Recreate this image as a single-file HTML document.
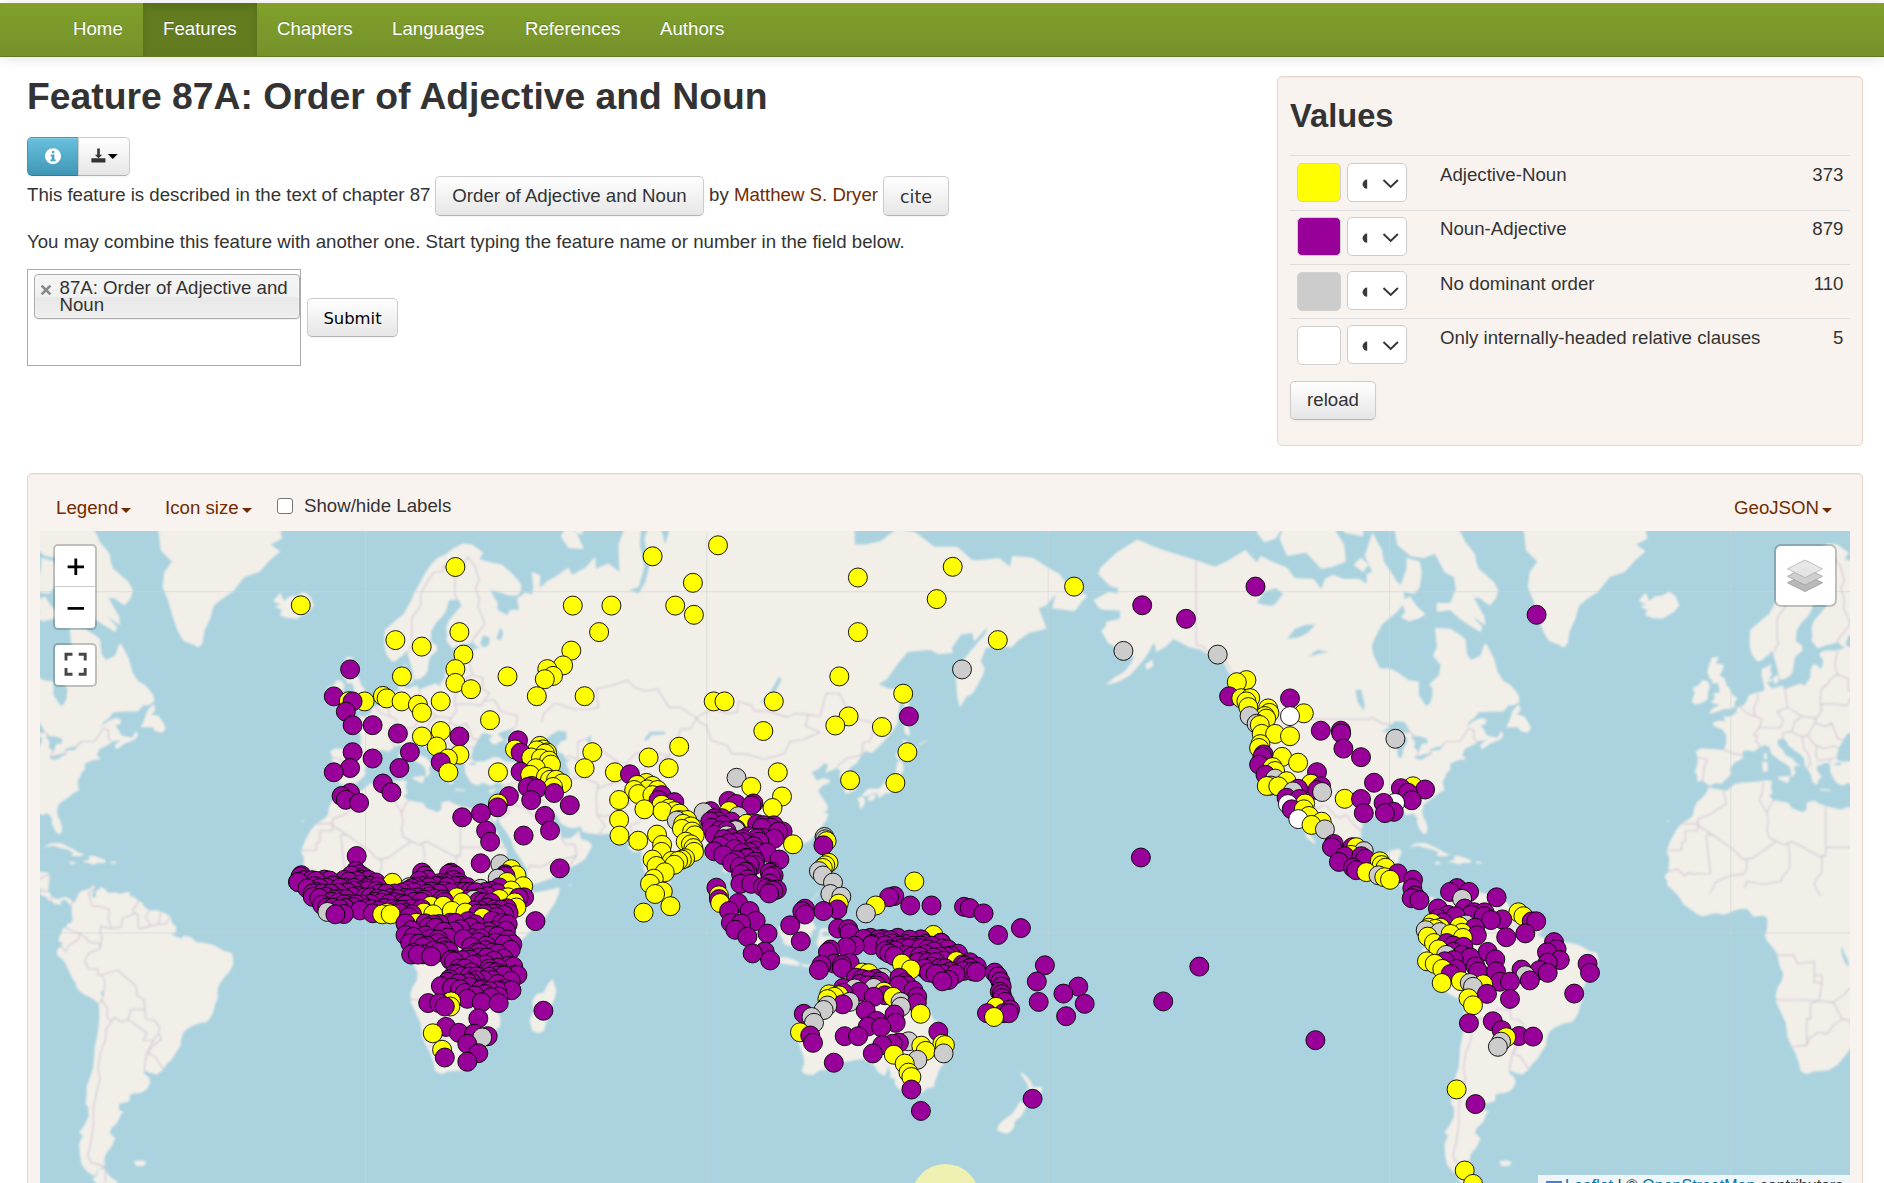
<!DOCTYPE html>
<html lang="en">
<head>
<meta charset="utf-8">
<title>WALS Online - Feature 87A: Order of Adjective and Noun</title>
<style>
html,body{margin:0;padding:0;}
body{width:1884px;height:1183px;overflow:hidden;background:#fff;position:relative;
 font-family:"Liberation Sans",Arial,Helvetica,sans-serif;font-size:18.67px;line-height:26.67px;color:#333;}
a{color:#6f2c00;text-decoration:none;}
#nav{position:absolute;left:0;top:3px;width:1884px;height:54px;
 background:linear-gradient(to bottom,#82a02a,#74922a);border-bottom:1px solid #5f7a1e;box-sizing:border-box;
 box-shadow:0 1px 13px rgba(0,0,0,.12);}
#nav a{position:absolute;top:0;height:53px;line-height:52px;color:#fff;font-size:18.67px;padding:0 20px;text-shadow:0 -1px 0 rgba(0,0,0,.2);}
#nav a.active{background:#637c20;box-shadow:inset 0 4px 10px rgba(0,0,0,.13);}
h2{position:absolute;margin:0;left:27px;top:71px;font-size:37.3px;line-height:50px;font-weight:bold;color:#333;white-space:nowrap;}
.btn{position:absolute;box-sizing:border-box;border:1px solid #ccc;border-bottom-color:#b3b3b3;border-radius:5px;
 background:linear-gradient(to bottom,#ffffff,#e6e6e6);color:#333;font-size:18.67px;text-align:center;
 box-shadow:inset 0 1px 0 rgba(255,255,255,.2),0 1px 3px rgba(0,0,0,.05);white-space:nowrap;}
.abs{position:absolute;white-space:nowrap;}
.well{position:absolute;box-sizing:border-box;background:#f9f3f0;border:1px solid #ecd2c8;border-radius:5px;
 box-shadow:inset 0 1px 1px rgba(0,0,0,.05);}
.caret{display:inline-block;width:0;height:0;vertical-align:middle;margin-left:3px;margin-top:3px;border-top:5.3px solid #6f2c00;border-left:5.3px solid transparent;border-right:5.3px solid transparent;}
</style>
</head>
<body>
<div id="nav">
 <a style="left:53px">Home</a>
 <a class="active" style="left:143px">Features</a>
 <a style="left:257px">Chapters</a>
 <a style="left:372px">Languages</a>
 <a style="left:505px">References</a>
 <a style="left:640px">Authors</a>
</div>
<h2>Feature 87A: Order of Adjective and Noun</h2>

<!-- toolbar buttons -->
<div class="btn" style="left:27px;top:137px;width:52px;height:39px;border-radius:5px 0 0 5px;background:linear-gradient(to bottom,#68c0de,#3f97b5);border-color:#3f97b5 #3f97b5 #2a7d99;">
 <svg width="52" height="39" viewBox="0 0 52 39" style="position:absolute;left:-1px;top:-1px"><circle cx="26" cy="19.2" r="8" fill="#fff"/><path d="M24.2 17.6h3.2v5h1.2v1.6h-5.2v-1.6h1.3v-3.4h-1.3z M24.9 14h2.4v2.2h-2.4z" fill="#4aa3c3"/></svg>
</div>
<div class="btn" style="left:78px;top:137px;width:52px;height:39px;border-radius:0 5px 5px 0;">
 <svg width="52" height="39" viewBox="0 0 52 39" style="position:absolute;left:-1px;top:-1px"><path d="M19.2 11.5h2.6v6.2h2.4l-3.7 3.6-3.7-3.6h2.4z M13.4 21.2h14v4.4h-14z" fill="#333"/><path d="M29.9 17h9.8l-4.9 5z" fill="#000"/></svg>
</div>

<div class="abs" style="left:27px;top:182px;">This feature is described in the text of chapter 87</div>
<div class="btn" style="left:435px;top:176px;width:269px;height:40px;line-height:38px;">Order of Adjective and Noun</div>
<div class="abs" style="left:709px;top:182px;">by <a>Matthew S. Dryer</a></div>
<div class="btn" style="left:883px;top:176px;width:66px;height:40px;line-height:40px;font-family:'DejaVu Sans',sans-serif;font-size:17.5px;">cite</div>
<div class="abs" style="left:27px;top:229px;">You may combine this feature with another one. Start typing the feature name or number in the field below.</div>

<!-- multiselect -->
<div style="position:absolute;left:27px;top:269px;width:274px;height:97px;box-sizing:border-box;border:1px solid #aaa;background:#fff;"></div>
<div style="position:absolute;left:34px;top:274px;width:266px;height:45px;box-sizing:border-box;border:1px solid #aaa;border-radius:4px;background:linear-gradient(to bottom,#f4f4f4 20%,#f0f0f0 50%,#e8e8e8 52%,#eeeeee 100%);box-shadow:0 0 2px #fff inset,0 1px 0 rgba(0,0,0,.05);"></div>
<svg width="12" height="12" viewBox="0 0 12 12" style="position:absolute;left:39.7px;top:283.6px"><path d="M1.6 1.6l8.8 8.8M10.4 1.6l-8.8 8.8" stroke="#8a8a8a" stroke-width="2.7" fill="none"/></svg>
<div class="abs" style="left:59.5px;top:279px;line-height:17px;white-space:normal;width:240px;">87A: Order of Adjective and Noun</div>
<div class="btn" style="left:307px;top:298px;width:91px;height:39px;line-height:39px;font-family:'DejaVu Sans',sans-serif;font-size:16.4px;color:#000;">Submit</div>

<!-- values panel -->
<div class="well" style="left:1277px;top:76px;width:586px;height:370px;"></div>
<div class="abs" style="left:1290px;top:95.7px;font-size:32.67px;line-height:40px;font-weight:bold;">Values</div>
<div style="position:absolute;left:1290px;top:155.2px;width:560px;height:1.3px;background:#ddd;"></div>
<div style="position:absolute;left:1297px;top:163.0px;width:44px;height:39px;box-sizing:border-box;border:1px solid #d0d0d0;border-radius:5px;background:#ffff00;"></div>
<div style="position:absolute;left:1347px;top:162.5px;width:60px;height:39px;box-sizing:border-box;border:1px solid #ccc;border-radius:5px;background:#fff;"><svg width="58" height="37" viewBox="0 0 58 37" style="position:absolute;left:0;top:0"><path d="M19.2 15.6a4.6 4.6 0 0 0 0 9.2z" fill="#3a3a3a"/><path d="M35.5 16l7.2 7 7.2-7" fill="none" stroke="#333" stroke-width="1.9"/></svg></div>
<div class="abs" style="left:1440px;top:161.9px;">Adjective-Noun</div>
<div class="abs" style="left:1700px;width:143.5px;text-align:right;top:161.9px;">373</div>
<div style="position:absolute;left:1290px;top:209.5px;width:560px;height:1.3px;background:#ddd;"></div>
<div style="position:absolute;left:1297px;top:217.3px;width:44px;height:39px;box-sizing:border-box;border:1px solid #d0d0d0;border-radius:5px;background:#990099;"></div>
<div style="position:absolute;left:1347px;top:216.8px;width:60px;height:39px;box-sizing:border-box;border:1px solid #ccc;border-radius:5px;background:#fff;"><svg width="58" height="37" viewBox="0 0 58 37" style="position:absolute;left:0;top:0"><path d="M19.2 15.6a4.6 4.6 0 0 0 0 9.2z" fill="#3a3a3a"/><path d="M35.5 16l7.2 7 7.2-7" fill="none" stroke="#333" stroke-width="1.9"/></svg></div>
<div class="abs" style="left:1440px;top:216.2px;">Noun-Adjective</div>
<div class="abs" style="left:1700px;width:143.5px;text-align:right;top:216.2px;">879</div>
<div style="position:absolute;left:1290px;top:263.8px;width:560px;height:1.3px;background:#ddd;"></div>
<div style="position:absolute;left:1297px;top:271.6px;width:44px;height:39px;box-sizing:border-box;border:1px solid #d0d0d0;border-radius:5px;background:#cccccc;"></div>
<div style="position:absolute;left:1347px;top:271.1px;width:60px;height:39px;box-sizing:border-box;border:1px solid #ccc;border-radius:5px;background:#fff;"><svg width="58" height="37" viewBox="0 0 58 37" style="position:absolute;left:0;top:0"><path d="M19.2 15.6a4.6 4.6 0 0 0 0 9.2z" fill="#3a3a3a"/><path d="M35.5 16l7.2 7 7.2-7" fill="none" stroke="#333" stroke-width="1.9"/></svg></div>
<div class="abs" style="left:1440px;top:270.5px;">No dominant order</div>
<div class="abs" style="left:1700px;width:143.5px;text-align:right;top:270.5px;">110</div>
<div style="position:absolute;left:1290px;top:318.1px;width:560px;height:1.3px;background:#ddd;"></div>
<div style="position:absolute;left:1297px;top:325.9px;width:44px;height:39px;box-sizing:border-box;border:1px solid #d0d0d0;border-radius:5px;background:#ffffff;"></div>
<div style="position:absolute;left:1347px;top:325.4px;width:60px;height:39px;box-sizing:border-box;border:1px solid #ccc;border-radius:5px;background:#fff;"><svg width="58" height="37" viewBox="0 0 58 37" style="position:absolute;left:0;top:0"><path d="M19.2 15.6a4.6 4.6 0 0 0 0 9.2z" fill="#3a3a3a"/><path d="M35.5 16l7.2 7 7.2-7" fill="none" stroke="#333" stroke-width="1.9"/></svg></div>
<div class="abs" style="left:1440px;top:324.8px;">Only internally-headed relative clauses</div>
<div class="abs" style="left:1700px;width:143.5px;text-align:right;top:324.8px;">5</div>

<div class="btn" style="left:1290px;top:381px;width:86px;height:39px;line-height:35px;">reload</div>

<!-- map panel -->
<div class="well" style="left:27px;top:473px;width:1836px;height:760px;"></div>
<div class="abs" style="left:56px;top:494.5px;color:#6f2c00;">Legend<span class="caret"></span></div>
<div class="abs" style="left:165px;top:494.5px;color:#6f2c00;">Icon size<span class="caret"></span></div>
<div style="position:absolute;left:277px;top:498px;width:16px;height:16px;box-sizing:border-box;border:1.5px solid #767676;border-radius:3px;background:#fff;"></div>
<div class="abs" style="left:304px;top:493px;">Show/hide Labels</div>
<div class="abs" style="left:1734px;top:494.5px;color:#6f2c00;">GeoJSON<span class="caret"></span></div>
<!--MAP-->
<svg id="mapsvg" width="1810" height="652" viewBox="40 531 1810 652" style="position:absolute;left:40px;top:531px;">
<rect x="40" y="531" width="1810" height="652" fill="#aad3df"/>
<defs><filter id="soft" x="30" y="521" width="1830" height="672" filterUnits="userSpaceOnUse"><feGaussianBlur stdDeviation="0.9"/></filter></defs>
<g filter="url(#soft)"><rect x="30" y="521" width="1830" height="672" fill="#aad3df"/><path d="M343.1 787.4L354.5 789.7L361.7 790.7L369.3 784.1L376.9 782.7L392.0 781.8L402.7 780.3L407.2 781.8L405.3 786.5L407.2 793.4L403.4 795.7L407.2 799.4L412.9 801.2L423.1 803.0L426.2 807.9L437.6 812.3L441.4 809.2L441.4 802.5L448.9 800.7L453.5 803.4L460.3 806.1L475.5 809.7L483.1 807.0L488.0 808.3L495.2 807.9L497.9 815.8L495.6 823.2L492.9 820.2L489.1 814.1L488.8 815.8L492.6 823.2L496.3 830.8L500.1 839.2L505.4 847.4L507.0 852.3L506.6 859.6L511.5 863.6L515.3 873.5L521.0 877.4L526.7 883.3L529.7 885.2L529.3 889.1L532.4 893.0L540.0 891.8L547.5 890.2L559.7 887.5L558.9 893.0L555.1 902.6L547.5 914.0L540.0 923.5L532.4 929.2L524.8 936.8L521.0 940.6L517.2 944.4L515.3 952.0L513.4 957.7L515.3 963.4L517.2 973.0L519.9 982.7L519.1 990.6L513.4 998.4L505.8 1002.4L498.2 1010.4L500.1 1018.6L500.1 1026.8L490.7 1033.1L489.9 1039.4L483.1 1051.5L471.7 1065.3L463.0 1070.3L448.9 1071.2L441.4 1073.9L435.3 1071.2L433.8 1063.5L430.0 1052.4L426.2 1045.8L422.4 1037.3L420.5 1022.7L416.7 1014.5L411.0 1002.4L410.3 994.5L412.9 986.6L416.7 980.8L417.8 973.0L414.8 967.3L412.1 955.8L411.0 952.0L401.5 940.6L399.6 935.7L401.5 929.2L402.3 921.6L401.5 917.8L397.7 915.5L392.0 916.3L388.3 916.7L384.5 912.1L382.2 909.1L375.0 909.1L369.3 910.6L363.6 912.9L357.9 914.8L354.1 913.6L348.4 913.3L337.1 916.3L331.4 914.0L323.8 907.9L318.1 904.5L315.1 898.7L310.5 893.0L306.7 889.1L302.2 885.6L301.8 881.3L299.1 876.6L302.9 871.5L303.7 863.6L304.1 857.6L301.0 851.5L304.8 841.3L310.5 830.8L316.2 823.6L323.8 818.9L327.6 815.8L328.7 809.2L331.4 802.5L337.1 797.6L340.8 793.4ZM1708.5 787.4L1719.8 789.7L1727.0 790.7L1734.6 784.1L1742.2 782.7L1757.4 781.8L1768.0 780.3L1772.6 781.8L1770.7 786.5L1772.6 793.4L1768.8 795.7L1772.6 799.4L1778.2 801.2L1788.5 803.0L1791.5 807.9L1802.9 812.3L1806.7 809.2L1806.7 802.5L1814.3 800.7L1818.8 803.4L1825.6 806.1L1840.8 809.7L1848.4 807.0L1853.3 808.3L1860.5 807.9L1863.2 815.8L1860.9 823.2L1858.3 820.2L1854.5 814.1L1854.1 815.8L1857.9 823.2L1861.7 830.8L1865.5 839.2L1870.8 847.4L1872.3 852.3L1871.9 859.6L1876.8 863.6L1880.6 873.5L1886.3 877.4L1892.0 883.3L1895.1 885.2L1894.7 889.1L1897.7 893.0L1905.3 891.8L1912.9 890.2L1925.0 887.5L1924.3 893.0L1920.5 902.6L1912.9 914.0L1905.3 923.5L1897.7 929.2L1890.1 936.8L1886.3 940.6L1882.5 944.4L1880.6 952.0L1878.7 957.7L1880.6 963.4L1882.5 973.0L1885.2 982.7L1884.4 990.6L1878.7 998.4L1871.2 1002.4L1863.6 1010.4L1865.5 1018.6L1865.5 1026.8L1856.0 1033.1L1855.2 1039.4L1848.4 1051.5L1837.0 1065.3L1828.3 1070.3L1814.3 1071.2L1806.7 1073.9L1800.6 1071.2L1799.1 1063.5L1795.3 1052.4L1791.5 1045.8L1787.7 1037.3L1785.8 1022.7L1782.0 1014.5L1776.3 1002.4L1775.6 994.5L1778.2 986.6L1782.0 980.8L1783.2 973.0L1780.1 967.3L1777.5 955.8L1776.3 952.0L1766.9 940.6L1765.0 935.7L1766.9 929.2L1767.6 921.6L1766.9 917.8L1763.1 915.5L1757.4 916.3L1753.6 916.7L1749.8 912.1L1747.5 909.1L1740.3 909.1L1734.6 910.6L1728.9 912.9L1723.2 914.8L1719.5 913.6L1713.8 913.3L1702.4 916.3L1696.7 914.0L1689.1 907.9L1683.4 904.5L1680.4 898.7L1675.8 893.0L1672.0 889.1L1667.5 885.6L1667.1 881.3L1664.5 876.6L1668.3 871.5L1669.0 863.6L1669.4 857.6L1666.4 851.5L1670.2 841.3L1675.8 830.8L1681.5 823.6L1689.1 818.9L1692.9 815.8L1694.0 809.2L1696.7 802.5L1702.4 797.6L1706.2 793.4ZM552.5 978.8L556.3 990.6L554.4 998.4L549.4 1010.4L545.6 1024.7L543.8 1031.0L538.1 1033.1L532.4 1031.0L529.7 1020.6L533.5 1010.4L532.4 1000.4L536.2 994.5L543.8 992.5L547.5 984.7ZM488.0 808.3L495.2 807.9L497.9 801.2L500.1 796.2L501.7 788.8L502.8 783.2L496.3 782.7L490.7 786.0L483.1 782.7L477.4 785.5L471.7 783.2L469.0 779.4L466.0 774.6L464.9 769.7L464.9 766.7L464.1 763.2L458.4 762.7L454.6 765.7L452.0 764.7L451.2 769.7L453.5 773.1L456.5 777.0L452.7 779.9L452.7 784.1L450.1 783.7L447.8 782.7L446.3 778.4L445.9 775.1L443.2 770.7L439.5 765.7L439.1 759.7L435.7 754.6L430.0 751.0L423.5 745.7L420.5 740.4L417.5 738.2L412.1 739.9L412.5 745.7L416.7 748.9L420.5 755.6L426.2 757.7L430.0 762.2L435.7 766.2L430.0 765.2L428.5 769.2L430.4 772.1L428.1 775.5L425.0 777.5L426.2 773.6L424.7 767.2L420.5 763.7L414.8 760.7L411.8 758.2L407.2 755.1L405.3 752.0L404.2 747.3L399.3 744.7L393.9 747.8L388.3 751.5L382.6 749.9L377.6 751.0L377.3 755.1L377.6 757.7L373.8 760.2L368.5 763.2L364.4 769.7L365.9 773.6L362.8 777.5L358.7 780.8L357.2 783.2L348.8 783.2L345.0 786.0L341.6 784.1L337.4 780.8L331.7 781.8L332.1 775.1L329.5 773.1L331.7 766.2L332.5 761.2L331.7 754.6L330.2 751.5L335.2 748.4L343.9 748.9L351.1 749.4L358.7 749.9L360.9 743.1L360.9 735.0L357.2 729.4L348.8 726.1L347.3 722.7L354.1 720.4L359.4 721.5L358.7 715.1L361.3 716.9L365.9 716.3L371.2 712.8L371.6 708.0L378.8 705.0L381.4 700.7L383.7 695.1L392.0 692.6L397.7 691.3L399.3 688.7L398.1 682.2L396.2 675.5L396.6 668.6L401.5 667.2L405.7 663.7L404.9 672.1L406.8 673.4L403.4 678.9L401.9 682.2L403.4 685.5L407.2 688.7L411.0 687.4L416.7 685.5L419.4 689.4L426.2 686.8L435.7 683.5L439.5 686.1L441.4 682.8L445.1 677.5L445.1 670.0L447.8 664.4L451.2 664.4L453.9 667.9L456.5 668.6L458.0 659.4L454.6 656.5L454.6 652.8L459.6 650.6L471.7 650.6L480.0 647.6L475.5 645.3L473.6 642.2L460.3 645.3L452.4 648.3L446.3 640.7L447.0 635.2L446.3 627.1L448.9 620.4L458.4 609.2L461.8 605.6L458.4 599.3L448.9 600.2L446.3 610.1L442.5 616.2L435.7 623.0L431.1 631.2L430.7 641.5L436.4 645.3L437.2 650.6L430.0 656.5L428.5 663.0L427.7 670.7L425.4 674.8L419.7 678.9L414.8 679.5L413.7 675.5L412.1 669.3L410.6 663.7L408.0 654.3L405.7 650.6L404.2 654.3L401.5 655.8L395.8 660.8L392.0 661.6L386.7 655.0L384.5 646.8L384.5 635.2L385.2 629.6L390.2 625.5L397.7 618.7L403.4 614.5L408.0 606.5L412.1 598.4L414.8 591.8L420.5 582.1L424.3 575.0L428.1 568.8L431.9 563.5L437.6 558.1L445.1 554.8L453.9 548.0L463.0 543.4L471.7 544.5L483.1 552.5L479.3 559.2L490.7 562.5L502.0 564.6L513.4 575.0L521.0 584.1L521.0 590.8L517.2 595.6L509.6 595.6L498.2 591.8L490.7 589.9L488.4 586.0L492.6 594.6L497.5 602.9L497.5 610.1L507.7 615.3L509.6 610.1L519.1 610.1L517.2 598.4L524.8 592.7L532.4 594.6L533.5 587.0L531.6 572.0L540.0 575.0L540.0 588.0L547.5 581.1L555.1 577.1L568.4 567.8L572.2 575.0L585.5 567.8L595.0 557.0L596.1 568.8L608.2 563.5L619.6 572.0L618.8 555.9L618.5 544.5L625.3 526.4L631.0 516.0L641.6 522.5L639.7 544.5L644.3 566.7L638.6 587.0L629.1 589.9L638.6 593.7L645.4 582.1L649.2 566.7L644.6 538.6L649.9 522.5L661.3 530.1L665.1 544.5L670.8 526.4L680.3 513.4L706.8 485.0L759.9 448.9L794.1 477.3L771.3 517.4L796.0 512.0L820.6 520.0L847.2 512.0L854.7 532.6L854.7 544.5L866.1 544.5L881.3 541.0L896.5 528.9L915.4 532.6L934.4 546.8L957.1 546.8L972.3 560.3L979.9 560.3L998.9 558.1L1010.2 566.7L1012.1 555.9L1033.0 558.1L1048.2 567.8L1059.5 574.0L1069.0 587.0L1087.2 595.6L1082.3 601.1L1074.7 611.0L1052.0 608.3L1055.8 593.7L1046.3 605.6L1038.7 608.3L1044.4 623.0L1046.3 628.7L1029.2 632.8L1017.8 640.7L1011.4 647.6L997.0 645.3L985.6 648.3L980.7 661.6L984.8 668.6L982.9 674.8L979.1 682.2L972.3 693.8L966.6 696.4L959.8 707.4L957.1 695.1L956.0 675.5L960.9 663.0L971.2 650.6L985.6 633.6L987.5 627.1L974.2 641.5L972.3 632.8L960.9 634.4L951.5 648.3L953.4 652.8L938.2 654.3L930.6 649.8L907.8 652.1L898.4 663.0L887.0 678.9L878.6 684.2L888.9 688.7L896.5 688.7L901.4 693.8L900.3 702.6L898.4 713.4L897.6 723.2L890.8 733.3L881.3 744.1L871.8 753.1L865.7 751.0L861.2 755.6L857.4 762.2L849.4 768.2L849.1 770.7L852.5 774.6L856.3 781.8L856.3 788.8L852.8 791.6L845.3 793.9L844.5 788.8L846.0 782.7L844.1 778.4L839.6 777.9L840.7 770.7L836.9 767.7L829.3 771.2L825.2 773.1L828.2 764.7L824.4 763.2L818.0 769.2L811.9 772.1L814.2 777.0L816.8 780.8L823.3 777.9L830.1 779.9L829.3 782.7L821.7 786.0L818.0 791.1L821.7 796.7L827.4 805.2L827.8 809.7L823.6 812.3L828.2 814.1L826.3 820.2L821.7 826.6L818.7 832.9L813.8 837.1L808.5 841.7L799.0 845.4L796.0 846.6L789.5 849.1L784.6 850.3L783.8 853.9L781.9 849.5L776.2 849.1L770.5 852.3L766.8 858.8L769.4 864.4L774.3 870.7L778.9 877.4L780.0 885.2L778.9 889.5L772.1 893.3L770.2 896.8L764.5 899.9L763.0 895.7L761.8 893.3L756.1 889.9L753.5 886.4L748.6 884.4L748.2 881.7L744.8 881.7L744.4 887.2L741.7 893.0L742.1 898.0L746.3 902.6L746.7 905.6L752.3 909.4L756.9 914.8L758.0 922.4L760.7 927.7L758.0 928.1L753.1 924.7L749.7 922.0L747.0 917.1L745.9 911.0L743.6 907.1L739.8 902.6L738.3 898.7L739.4 893.0L739.8 887.2L737.9 881.3L736.0 875.4L735.7 869.9L732.6 867.6L727.3 872.3L723.1 871.5L723.9 865.6L720.9 858.4L715.6 852.3L713.7 846.2L708.7 845.0L703.0 848.3L695.5 849.5L694.7 854.3L688.6 857.2L681.4 864.8L677.6 868.7L670.0 872.3L669.3 879.4L670.0 885.2L668.1 891.0L668.1 893.7L665.1 897.6L662.1 899.1L659.4 902.2L655.6 898.7L653.0 889.9L649.2 883.3L647.3 876.2L644.3 870.3L641.6 859.6L641.6 851.5L640.5 848.3L639.3 851.5L634.0 852.3L627.9 847.4L632.1 844.2L625.3 842.1L621.1 837.9L618.1 833.8L608.2 833.8L598.7 834.6L589.3 833.3L582.8 831.7L580.9 826.6L574.1 827.9L568.4 827.4L560.8 823.2L556.3 814.5L550.6 812.3L547.5 814.1L548.3 819.3L553.2 825.3L555.9 828.7L557.8 835.0L559.3 830.8L561.2 833.3L560.4 837.1L564.6 838.4L570.3 838.4L577.1 832.9L579.0 829.6L579.8 835.0L581.7 839.6L588.1 841.3L592.3 845.4L588.5 852.7L584.7 859.6L582.8 860.8L576.0 864.8L563.9 870.7L551.3 878.2L536.9 883.3L530.5 884.4L527.8 877.4L526.7 868.7L521.0 859.6L514.2 849.5L511.5 840.4L507.0 832.9L499.4 822.3L497.9 815.8L495.6 823.2L492.9 820.2L489.1 814.1ZM1853.3 808.3L1860.5 807.9L1863.2 801.2L1865.5 796.2L1867.0 788.8L1868.1 783.2L1861.7 782.7L1856.0 786.0L1848.4 782.7L1842.7 785.5L1837.0 783.2L1834.4 779.4L1831.3 774.6L1830.2 769.7L1830.2 766.7L1829.4 763.2L1823.8 762.7L1820.0 765.7L1817.3 764.7L1816.5 769.7L1818.8 773.1L1821.9 777.0L1818.1 779.9L1818.1 784.1L1815.4 783.7L1813.1 782.7L1811.6 778.4L1811.2 775.1L1808.6 770.7L1804.8 765.7L1804.4 759.7L1801.0 754.6L1795.3 751.0L1788.9 745.7L1785.8 740.4L1782.8 738.2L1777.5 739.9L1777.9 745.7L1782.0 748.9L1785.8 755.6L1791.5 757.7L1795.3 762.2L1801.0 766.2L1795.3 765.2L1793.8 769.2L1795.7 772.1L1793.4 775.5L1790.4 777.5L1791.5 773.6L1790.0 767.2L1785.8 763.7L1780.1 760.7L1777.1 758.2L1772.6 755.1L1770.7 752.0L1769.5 747.3L1764.6 744.7L1759.3 747.8L1753.6 751.5L1747.9 749.9L1743.0 751.0L1742.6 755.1L1743.0 757.7L1739.2 760.2L1733.9 763.2L1729.7 769.7L1731.2 773.6L1728.2 777.5L1724.0 780.8L1722.5 783.2L1714.1 783.2L1710.4 786.0L1706.9 784.1L1702.8 780.8L1697.1 781.8L1697.5 775.1L1694.8 773.1L1697.1 766.2L1697.8 761.2L1697.1 754.6L1695.6 751.5L1700.5 748.4L1709.2 748.9L1716.4 749.4L1724.0 749.9L1726.3 743.1L1726.3 735.0L1722.5 729.4L1714.1 726.1L1712.6 722.7L1719.5 720.4L1724.8 721.5L1724.0 715.1L1726.7 716.9L1731.2 716.3L1736.5 712.8L1736.9 708.0L1744.1 705.0L1746.8 700.7L1749.0 695.1L1757.4 692.6L1763.1 691.3L1764.6 688.7L1763.4 682.2L1761.6 675.5L1761.9 668.6L1766.9 667.2L1771.0 663.7L1770.3 672.1L1772.2 673.4L1768.8 678.9L1767.2 682.2L1768.8 685.5L1772.6 688.7L1776.3 687.4L1782.0 685.5L1784.7 689.4L1791.5 686.8L1801.0 683.5L1804.8 686.1L1806.7 682.8L1810.5 677.5L1810.5 670.0L1813.1 664.4L1816.5 664.4L1819.2 667.9L1821.9 668.6L1823.4 659.4L1820.0 656.5L1820.0 652.8L1824.9 650.6L1837.0 650.6L1845.4 647.6L1840.8 645.3L1838.9 642.2L1825.6 645.3L1817.7 648.3L1811.6 640.7L1812.4 635.2L1811.6 627.1L1814.3 620.4L1823.8 609.2L1827.2 605.6L1823.8 599.3L1814.3 600.2L1811.6 610.1L1807.8 616.2L1801.0 623.0L1796.4 631.2L1796.1 641.5L1801.8 645.3L1802.5 650.6L1795.3 656.5L1793.8 663.0L1793.0 670.7L1790.8 674.8L1785.1 678.9L1780.1 679.5L1779.0 675.5L1777.5 669.3L1776.0 663.7L1773.3 654.3L1771.0 650.6L1769.5 654.3L1766.9 655.8L1761.2 660.8L1757.4 661.6L1752.1 655.0L1749.8 646.8L1749.8 635.2L1750.6 629.6L1755.5 625.5L1763.1 618.7L1768.8 614.5L1773.3 606.5L1777.5 598.4L1780.1 591.8L1785.8 582.1L1789.6 575.0L1793.4 568.8L1797.2 563.5L1802.9 558.1L1810.5 554.8L1819.2 548.0L1828.3 543.4L1837.0 544.5L1848.4 552.5L1844.6 559.2L1856.0 562.5L1867.4 564.6L1878.7 575.0L1886.3 584.1L1886.3 590.8L1882.5 595.6L1875.0 595.6L1863.6 591.8L1856.0 589.9L1853.7 586.0L1857.9 594.6L1862.8 602.9L1862.8 610.1L1873.1 615.3L1875.0 610.1L1884.4 610.1L1882.5 598.4L1890.1 592.7L1897.7 594.6L1898.8 587.0L1896.9 572.0L1905.3 575.0L1905.3 588.0L1912.9 581.1L1920.5 577.1L1933.7 567.8L1937.5 575.0L1950.8 567.8L1960.3 557.0L1961.4 568.8L1973.6 563.5L1984.9 572.0L1984.2 555.9L1983.8 544.5L1990.6 526.4L1996.3 516.0L2006.9 522.5L2005.0 544.5L2009.6 566.7L2003.9 587.0L1994.4 589.9L2003.9 593.7L2010.7 582.1L2014.5 566.7L2010.0 538.6L2015.3 522.5L2026.7 530.1L2030.4 544.5L2036.1 526.4L2045.6 513.4L2072.2 485.0L2125.3 448.9L2159.4 477.3L2136.6 517.4L2161.3 512.0L2185.9 520.0L2212.5 512.0L2220.1 532.6L2220.1 544.5L2231.5 544.5L2246.6 541.0L2261.8 528.9L2280.8 532.6L2299.7 546.8L2322.5 546.8L2337.6 560.3L2345.2 560.3L2364.2 558.1L2375.6 566.7L2377.5 555.9L2398.3 558.1L2413.5 567.8L2424.9 574.0L2434.4 587.0L2452.6 595.6L2447.6 601.1L2440.0 611.0L2417.3 608.3L2421.1 593.7L2411.6 605.6L2404.0 608.3L2409.7 623.0L2411.6 628.7L2394.5 632.8L2383.2 640.7L2376.7 647.6L2362.3 645.3L2350.9 648.3L2346.0 661.6L2350.2 668.6L2348.3 674.8L2344.5 682.2L2337.6 693.8L2332.0 696.4L2325.1 707.4L2322.5 695.1L2321.3 675.5L2326.3 663.0L2336.5 650.6L2350.9 633.6L2352.8 627.1L2339.5 641.5L2337.6 632.8L2326.3 634.4L2316.8 648.3L2318.7 652.8L2303.5 654.3L2295.9 649.8L2273.2 652.1L2263.7 663.0L2252.3 678.9L2244.0 684.2L2254.2 688.7L2261.8 688.7L2266.7 693.8L2265.6 702.6L2263.7 713.4L2262.9 723.2L2256.1 733.3L2246.6 744.1L2237.1 753.1L2231.1 751.0L2226.5 755.6L2222.7 762.2L2214.8 768.2L2214.4 770.7L2217.8 774.6L2221.6 781.8L2221.6 788.8L2218.2 791.6L2210.6 793.9L2209.8 788.8L2211.4 782.7L2209.5 778.4L2204.9 777.9L2206.0 770.7L2202.3 767.7L2194.7 771.2L2190.5 773.1L2193.5 764.7L2189.7 763.2L2183.3 769.2L2177.2 772.1L2179.5 777.0L2182.2 780.8L2188.6 777.9L2195.4 779.9L2194.7 782.7L2187.1 786.0L2183.3 791.1L2187.1 796.7L2192.8 805.2L2193.1 809.7L2189.0 812.3L2193.5 814.1L2191.6 820.2L2187.1 826.6L2184.0 832.9L2179.1 837.1L2173.8 841.7L2164.3 845.4L2161.3 846.6L2154.8 849.1L2149.9 850.3L2149.2 853.9L2147.3 849.5L2141.6 849.1L2135.9 852.3L2132.1 858.8L2134.7 864.4L2139.7 870.7L2144.2 877.4L2145.4 885.2L2144.2 889.5L2137.4 893.3L2135.5 896.8L2129.8 899.9L2128.3 895.7L2127.2 893.3L2121.5 889.9L2118.8 886.4L2113.9 884.4L2113.5 881.7L2110.1 881.7L2109.7 887.2L2107.1 893.0L2107.4 898.0L2111.6 902.6L2112.0 905.6L2117.7 909.4L2122.2 914.8L2123.4 922.4L2126.0 927.7L2123.4 928.1L2118.4 924.7L2115.0 922.0L2112.4 917.1L2111.2 911.0L2109.0 907.1L2105.2 902.6L2103.6 898.7L2104.8 893.0L2105.2 887.2L2103.3 881.3L2101.4 875.4L2101.0 869.9L2098.0 867.6L2092.6 872.3L2088.5 871.5L2089.2 865.6L2086.2 858.4L2080.9 852.3L2079.0 846.2L2074.1 845.0L2068.4 848.3L2060.8 849.5L2060.0 854.3L2054.0 857.2L2046.8 864.8L2043.0 868.7L2035.4 872.3L2034.6 879.4L2035.4 885.2L2033.5 891.0L2033.5 893.7L2030.4 897.6L2027.4 899.1L2024.8 902.2L2021.0 898.7L2018.3 889.9L2014.5 883.3L2012.6 876.2L2009.6 870.3L2006.9 859.6L2006.9 851.5L2005.8 848.3L2004.7 851.5L1999.3 852.3L1993.3 847.4L1997.5 844.2L1990.6 842.1L1986.5 837.9L1983.4 833.8L1973.6 833.8L1964.1 834.6L1954.6 833.3L1948.1 831.7L1946.3 826.6L1939.4 827.9L1933.7 827.4L1926.2 823.2L1921.6 814.5L1915.9 812.3L1912.9 814.1L1913.6 819.3L1918.6 825.3L1921.2 828.7L1923.1 835.0L1924.6 830.8L1926.5 833.3L1925.8 837.1L1929.9 838.4L1935.6 838.4L1942.5 832.9L1944.4 829.6L1945.1 835.0L1947.0 839.6L1953.5 841.3L1957.6 845.4L1953.8 852.7L1950.0 859.6L1948.1 860.8L1941.3 864.8L1929.2 870.7L1916.7 878.2L1902.3 883.3L1895.8 884.4L1893.2 877.4L1892.0 868.7L1886.3 859.6L1879.5 849.5L1876.8 840.4L1872.3 832.9L1864.7 822.3L1863.2 815.8L1860.9 823.2L1858.3 820.2L1854.5 814.1ZM-271.7 600.2L-256.5 591.8L-248.1 593.7L-247.0 588.0L-255.3 586.0L-267.1 574.0L-264.8 567.8L-248.5 552.5L-228.0 539.8L-211.0 546.8L-197.7 551.4L-169.3 560.3L-150.3 566.7L-138.9 561.4L-120.0 550.3L-108.6 562.5L-104.8 555.9L-93.4 561.4L-78.2 567.8L-70.6 578.1L-51.7 579.1L-44.1 588.9L-40.3 579.1L-32.7 575.0L-21.3 579.1L-6.2 579.1L1.4 584.1L1.4 574.0L7.1 572.0L-0.5 555.9L7.1 532.6L16.6 550.3L18.5 561.4L24.2 569.9L31.8 582.1L35.5 585.0L41.2 568.8L41.2 558.1L54.5 561.4L56.4 572.0L54.5 587.0L48.8 593.7L38.2 591.8L39.3 601.1L33.6 610.1L21.5 620.4L16.6 624.6L9.0 639.1L6.3 646.8L8.2 655.8L14.7 668.6L24.2 668.6L31.8 672.1L43.1 680.2L53.4 681.5L53.4 695.1L60.2 705.6L64.0 704.4L66.6 698.2L67.4 688.7L64.0 684.2L73.5 675.5L75.4 665.1L67.8 655.8L71.6 646.8L69.7 627.9L84.8 628.7L92.4 633.6L100.0 639.1L101.5 654.3L105.7 660.1L115.2 655.8L119.0 644.5L120.9 643.8L128.5 658.0L132.3 672.1L137.9 680.9L145.5 685.5L148.2 688.7L153.1 695.1L154.3 701.3L149.3 705.0L142.9 705.6L137.9 711.6L126.6 711.6L113.3 712.2L109.5 717.5L103.8 722.1L100.0 727.8L95.5 731.7L101.9 726.1L107.6 721.5L115.2 718.1L121.3 719.8L119.7 724.4L115.2 724.9L119.0 730.6L120.9 735.0L123.5 736.1L132.3 737.7L136.0 730.6L137.9 736.1L134.2 739.9L124.7 743.6L116.3 749.4L114.8 745.2L120.9 739.9L111.4 741.5L111.4 743.1L103.8 746.8L99.3 748.9L97.4 754.1L96.6 755.6L100.0 757.7L100.0 759.2L94.7 759.7L88.6 761.7L84.8 763.7L84.8 769.7L81.1 773.1L80.7 775.5L77.3 781.8L78.4 787.4L79.2 790.2L74.2 792.5L69.7 796.2L65.1 799.4L62.1 801.6L58.3 804.8L56.8 811.4L58.3 818.0L60.2 820.6L62.1 827.4L61.3 832.9L58.7 834.2L55.3 830.8L51.9 823.6L51.9 818.0L48.1 813.6L45.8 813.6L41.6 814.9L37.4 811.9L31.8 812.3L28.0 812.3L26.4 817.6L22.3 817.1L16.6 815.4L9.0 815.4L5.2 817.1L-2.4 822.3L-3.9 830.8L-5.0 839.2L-5.4 846.2L-3.1 852.7L0.7 858.8L6.0 862.4L9.0 862.8L16.6 861.2L21.5 858.0L22.6 851.5L31.8 849.1L35.5 849.5L36.3 852.3L33.6 857.6L32.5 862.8L31.0 865.6L29.1 871.5L31.8 872.3L39.3 871.9L46.9 872.3L50.0 875.4L48.8 883.3L48.1 891.0L50.7 894.9L53.7 898.0L58.3 899.5L62.5 897.6L65.9 896.8L71.6 899.9L72.0 900.3L70.1 905.6L68.2 902.2L64.0 899.1L60.6 901.8L61.0 905.2L55.6 903.7L51.5 901.8L48.4 900.6L48.1 898.3L43.9 896.0L40.5 894.9L40.1 891.0L35.5 885.2L33.3 882.9L28.0 882.1L22.3 879.8L15.8 877.4L9.8 871.9L6.0 870.7L-0.5 872.7L-8.1 870.3L-13.4 868.4L-20.6 864.4L-27.0 862.4L-33.5 858.0L-35.4 853.9L-33.9 849.5L-36.5 844.2L-38.0 842.5L-44.1 835.0L-49.4 832.1L-49.4 826.6L-54.0 822.7L-60.0 818.0L-63.1 809.2L-69.5 806.1L-69.5 811.4L-65.0 818.0L-62.3 822.3L-57.4 830.0L-53.6 837.1L-49.8 842.5L-51.3 843.7L-59.3 837.1L-60.0 830.8L-66.9 826.2L-70.6 823.2L-67.6 820.2L-73.7 812.8L-77.1 805.7L-78.6 802.5L-83.5 796.7L-91.5 793.4L-96.8 783.7L-99.1 777.9L-104.0 769.7L-105.9 765.2L-105.5 757.2L-106.7 752.0L-104.8 744.1L-104.8 735.0L-107.4 722.7L-101.0 723.8L-99.1 727.8L-100.2 719.2L-101.7 717.5L-107.8 713.4L-116.2 707.4L-120.0 698.2L-128.7 686.8L-131.3 678.9L-137.0 672.1L-142.7 660.1L-150.3 659.4L-156.0 655.8L-164.3 649.8L-176.8 646.8L-188.2 640.7L-192.0 639.1L-199.6 646.8L-209.1 652.1L-211.0 643.0L-203.4 637.6L-212.9 644.5L-216.7 652.1L-220.5 658.0L-228.0 667.2L-235.6 675.5L-245.1 680.9L-252.7 683.5L-259.5 684.8L-250.8 677.5L-241.3 672.1L-233.7 663.0L-231.1 656.5L-235.6 655.8L-248.1 656.5L-248.9 647.6L-257.2 643.0L-261.4 635.2L-264.1 631.2L-259.5 626.3L-259.1 622.1L-245.1 618.7L-245.1 611.0L-250.8 610.1L-260.3 610.1L-266.0 608.3ZM1093.7 600.2L1108.8 591.8L1117.2 593.7L1118.3 588.0L1110.0 586.0L1098.2 574.0L1100.5 567.8L1116.8 552.5L1137.3 539.8L1154.4 546.8L1167.6 551.4L1196.1 560.3L1215.0 566.7L1226.4 561.4L1245.4 550.3L1256.8 562.5L1260.6 555.9L1271.9 561.4L1287.1 567.8L1294.7 578.1L1313.6 579.1L1321.2 588.9L1325.0 579.1L1332.6 575.0L1344.0 579.1L1359.2 579.1L1366.7 584.1L1366.7 574.0L1372.4 572.0L1364.8 555.9L1372.4 532.6L1381.9 550.3L1383.8 561.4L1389.5 569.9L1397.1 582.1L1400.9 585.0L1406.6 568.8L1406.6 558.1L1419.8 561.4L1421.7 572.0L1419.8 587.0L1414.2 593.7L1403.5 591.8L1404.7 601.1L1399.0 610.1L1386.8 620.4L1381.9 624.6L1374.3 639.1L1371.7 646.8L1373.6 655.8L1380.0 668.6L1389.5 668.6L1397.1 672.1L1408.5 680.2L1418.7 681.5L1418.7 695.1L1425.5 705.6L1429.3 704.4L1432.0 698.2L1432.7 688.7L1429.3 684.2L1438.8 675.5L1440.7 665.1L1433.1 655.8L1436.9 646.8L1435.0 627.9L1450.2 628.7L1457.8 633.6L1465.4 639.1L1466.9 654.3L1471.0 660.1L1480.5 655.8L1484.3 644.5L1486.2 643.8L1493.8 658.0L1497.6 672.1L1503.3 680.9L1510.9 685.5L1513.5 688.7L1518.4 695.1L1519.6 701.3L1514.7 705.0L1508.2 705.6L1503.3 711.6L1491.9 711.6L1478.6 712.2L1474.8 717.5L1469.1 722.1L1465.4 727.8L1460.8 731.7L1467.2 726.1L1472.9 721.5L1480.5 718.1L1486.6 719.8L1485.1 724.4L1480.5 724.9L1484.3 730.6L1486.2 735.0L1488.9 736.1L1497.6 737.7L1501.4 730.6L1503.3 736.1L1499.5 739.9L1490.0 743.6L1481.7 749.4L1480.1 745.2L1486.2 739.9L1476.7 741.5L1476.7 743.1L1469.1 746.8L1464.6 748.9L1462.7 754.1L1461.9 755.6L1465.4 757.7L1465.4 759.2L1460.0 759.7L1454.0 761.7L1450.2 763.7L1450.2 769.7L1446.4 773.1L1446.0 775.5L1442.6 781.8L1443.7 787.4L1444.5 790.2L1439.6 792.5L1435.0 796.2L1430.5 799.4L1427.4 801.6L1423.6 804.8L1422.1 811.4L1423.6 818.0L1425.5 820.6L1427.4 827.4L1426.7 832.9L1424.0 834.2L1420.6 830.8L1417.2 823.6L1417.2 818.0L1413.4 813.6L1411.1 813.6L1406.9 814.9L1402.8 811.9L1397.1 812.3L1393.3 812.3L1391.8 817.6L1387.6 817.1L1381.9 815.4L1374.3 815.4L1370.5 817.1L1363.0 822.3L1361.4 830.8L1360.3 839.2L1359.9 846.2L1362.2 852.7L1366.0 858.8L1371.3 862.4L1374.3 862.8L1381.9 861.2L1386.8 858.0L1388.0 851.5L1397.1 849.1L1400.9 849.5L1401.6 852.3L1399.0 857.6L1397.8 862.8L1396.3 865.6L1394.4 871.5L1397.1 872.3L1404.7 871.9L1412.3 872.3L1415.3 875.4L1414.2 883.3L1413.4 891.0L1416.0 894.9L1419.1 898.0L1423.6 899.5L1427.8 897.6L1431.2 896.8L1436.9 899.9L1437.3 900.3L1435.4 905.6L1433.5 902.2L1429.3 899.1L1425.9 901.8L1426.3 905.2L1421.0 903.7L1416.8 901.8L1413.8 900.6L1413.4 898.3L1409.2 896.0L1405.8 894.9L1405.4 891.0L1400.9 885.2L1398.6 882.9L1393.3 882.1L1387.6 879.8L1381.2 877.4L1375.1 871.9L1371.3 870.7L1364.8 872.7L1357.3 870.3L1352.0 868.4L1344.7 864.4L1338.3 862.4L1331.9 858.0L1330.0 853.9L1331.5 849.5L1328.8 844.2L1327.3 842.5L1321.2 835.0L1315.9 832.1L1315.9 826.6L1311.4 822.7L1305.3 818.0L1302.3 809.2L1295.8 806.1L1295.8 811.4L1300.4 818.0L1303.0 822.3L1308.0 830.0L1311.8 837.1L1315.5 842.5L1314.0 843.7L1306.1 837.1L1305.3 830.8L1298.5 826.2L1294.7 823.2L1297.7 820.2L1291.7 812.8L1288.2 805.7L1286.7 802.5L1281.8 796.7L1273.8 793.4L1268.5 783.7L1266.2 777.9L1261.3 769.7L1259.4 765.2L1259.8 757.2L1258.7 752.0L1260.6 744.1L1260.6 735.0L1257.9 722.7L1264.3 723.8L1266.2 727.8L1265.1 719.2L1263.6 717.5L1257.5 713.4L1249.2 707.4L1245.4 698.2L1236.7 686.8L1234.0 678.9L1228.3 672.1L1222.6 660.1L1215.0 659.4L1209.4 655.8L1201.0 649.8L1188.5 646.8L1177.1 640.7L1173.3 639.1L1165.7 646.8L1156.3 652.1L1154.4 643.0L1161.9 637.6L1152.5 644.5L1148.7 652.1L1144.9 658.0L1137.3 667.2L1129.7 675.5L1120.2 680.9L1112.6 683.5L1105.8 684.8L1114.5 677.5L1124.0 672.1L1131.6 663.0L1134.3 656.5L1129.7 655.8L1117.2 656.5L1116.4 647.6L1108.1 643.0L1103.9 635.2L1101.3 631.2L1105.8 626.3L1106.2 622.1L1120.2 618.7L1120.2 611.0L1114.5 610.1L1105.1 610.1L1099.4 608.3ZM72.0 900.3L74.2 902.6L77.3 897.6L79.2 893.0L81.8 891.0L88.6 889.5L93.6 885.6L95.5 887.9L92.8 891.0L94.0 894.9L95.5 891.4L100.0 889.1L100.8 886.4L106.1 890.2L107.6 893.0L115.2 892.6L120.9 894.1L126.6 892.2L130.4 892.6L129.2 895.7L134.9 897.6L137.9 900.6L141.7 902.6L144.4 906.8L149.3 910.6L156.9 910.6L160.7 911.3L166.4 914.0L170.2 916.7L172.1 923.5L175.9 926.6L175.9 932.2L170.9 934.9L175.9 936.8L181.6 938.7L183.5 935.7L191.0 937.6L196.7 942.5L202.4 942.5L210.0 944.0L217.6 947.0L224.4 951.2L231.6 952.7L233.1 959.6L232.8 965.4L229.0 972.3L224.4 976.9L220.2 982.7L217.6 988.6L217.6 998.4L214.9 1004.4L213.0 1012.5L210.0 1018.6L206.2 1022.3L200.5 1022.7L194.8 1025.1L189.1 1027.6L183.5 1032.2L181.2 1039.4L180.4 1045.8L175.9 1052.4L172.1 1059.0L167.1 1063.5L162.6 1070.3L156.9 1074.4L149.3 1072.6L144.4 1070.3L143.6 1073.0L148.6 1077.2L150.5 1081.9L147.0 1089.0L141.7 1092.4L130.4 1093.9L129.2 1101.3L119.0 1103.8L119.0 1110.4L123.9 1111.4L120.9 1114.0L117.8 1121.9L111.4 1128.3L109.5 1132.7L115.2 1138.2L111.4 1146.8L105.7 1153.8L103.8 1161.6L106.1 1166.5L101.9 1167.2L96.6 1170.9L96.2 1176.0L90.5 1174.1L86.7 1170.9L81.8 1164.7L79.9 1155.6L79.2 1143.9L83.0 1135.4L79.2 1132.7L84.8 1124.5L88.6 1116.6L88.6 1107.8L85.6 1103.8L86.7 1096.3L86.7 1086.6L89.4 1079.5L93.2 1068.0L94.3 1056.8L94.7 1048.0L96.6 1039.4L98.1 1031.0L99.3 1018.6L99.3 1010.4L98.9 1004.0L94.3 999.6L86.7 995.7L80.3 991.7L76.1 986.6L76.1 982.7L72.7 978.8L68.9 971.1L65.9 964.2L62.5 958.9L57.5 955.8L57.2 950.1L61.0 945.9L62.5 942.5L58.7 941.7L59.1 936.8L61.7 933.0L62.1 929.2L66.3 927.3L67.8 923.5L71.6 922.8L72.7 918.6L71.6 912.1L72.0 907.1L70.1 905.6ZM1437.3 900.3L1439.6 902.6L1442.6 897.6L1444.5 893.0L1447.1 891.0L1454.0 889.5L1458.9 885.6L1460.8 887.9L1458.1 891.0L1459.3 894.9L1460.8 891.4L1465.4 889.1L1466.1 886.4L1471.4 890.2L1472.9 893.0L1480.5 892.6L1486.2 894.1L1491.9 892.2L1495.7 892.6L1494.6 895.7L1500.2 897.6L1503.3 900.6L1507.1 902.6L1509.7 906.8L1514.7 910.6L1522.2 910.6L1526.0 911.3L1531.7 914.0L1535.5 916.7L1537.4 923.5L1541.2 926.6L1541.2 932.2L1536.3 934.9L1541.2 936.8L1546.9 938.7L1548.8 935.7L1556.4 937.6L1562.1 942.5L1567.8 942.5L1575.3 944.0L1582.9 947.0L1589.7 951.2L1597.0 952.7L1598.5 959.6L1598.1 965.4L1594.3 972.3L1589.7 976.9L1585.6 982.7L1582.9 988.6L1582.9 998.4L1580.3 1004.4L1578.4 1012.5L1575.3 1018.6L1571.5 1022.3L1565.9 1022.7L1560.2 1025.1L1554.5 1027.6L1548.8 1032.2L1546.5 1039.4L1545.8 1045.8L1541.2 1052.4L1537.4 1059.0L1532.5 1063.5L1527.9 1070.3L1522.2 1074.4L1514.7 1072.6L1509.7 1070.3L1509.0 1073.0L1513.9 1077.2L1515.8 1081.9L1512.4 1089.0L1507.1 1092.4L1495.7 1093.9L1494.6 1101.3L1484.3 1103.8L1484.3 1110.4L1489.2 1111.4L1486.2 1114.0L1483.2 1121.9L1476.7 1128.3L1474.8 1132.7L1480.5 1138.2L1476.7 1146.8L1471.0 1153.8L1469.1 1161.6L1471.4 1166.5L1467.2 1167.2L1461.9 1170.9L1461.6 1176.0L1455.9 1174.1L1452.1 1170.9L1447.1 1164.7L1445.3 1155.6L1444.5 1143.9L1448.3 1135.4L1444.5 1132.7L1450.2 1124.5L1454.0 1116.6L1454.0 1107.8L1450.9 1103.8L1452.1 1096.3L1452.1 1086.6L1454.7 1079.5L1458.5 1068.0L1459.7 1056.8L1460.0 1048.0L1461.9 1039.4L1463.5 1031.0L1464.6 1018.6L1464.6 1010.4L1464.2 1004.0L1459.7 999.6L1452.1 995.7L1445.6 991.7L1441.5 986.6L1441.5 982.7L1438.0 978.8L1434.3 971.1L1431.2 964.2L1427.8 958.9L1422.9 955.8L1422.5 950.1L1426.3 945.9L1427.8 942.5L1424.0 941.7L1424.4 936.8L1427.0 933.0L1427.4 929.2L1431.6 927.3L1433.1 923.5L1436.9 922.8L1438.0 918.6L1436.9 912.1L1437.3 907.1L1435.4 905.6ZM105.3 1168.4L98.1 1169.6L97.0 1175.4L92.4 1179.2L96.2 1183.2L103.8 1185.8L113.3 1185.1L118.2 1181.8L111.4 1177.9L107.6 1174.1ZM1470.7 1168.4L1463.5 1169.6L1462.3 1175.4L1457.8 1179.2L1461.6 1183.2L1469.1 1185.8L1478.6 1185.1L1483.6 1181.8L1476.7 1177.9L1472.9 1174.1ZM134.2 1161.0L141.7 1160.4L146.3 1162.2L143.6 1165.9L136.0 1165.9ZM1499.5 1161.0L1507.1 1160.4L1511.6 1162.2L1509.0 1165.9L1501.4 1165.9ZM198.6 647.6L192.9 644.5L183.5 640.7L177.8 631.2L172.1 614.5L168.3 601.1L162.6 587.0L164.5 572.0L172.1 561.4L160.7 550.3L158.8 532.6L153.1 513.4L145.5 485.0L107.6 474.1L88.6 434.2L119.0 403.6L137.9 354.9L213.8 309.7L270.7 325.8L297.2 380.6L289.6 424.4L295.3 461.0L285.9 485.0L291.5 506.6L278.3 520.0L282.1 538.6L270.7 544.5L280.2 551.4L270.7 559.2L259.3 572.0L244.1 577.1L232.8 591.8L221.4 599.3L213.8 605.6L210.0 618.7L204.3 631.2L202.4 643.0ZM1564.0 647.6L1558.3 644.5L1548.8 640.7L1543.1 631.2L1537.4 614.5L1533.6 601.1L1527.9 587.0L1529.8 572.0L1537.4 561.4L1526.0 550.3L1524.1 532.6L1518.4 513.4L1510.9 485.0L1472.9 474.1L1454.0 434.2L1484.3 403.6L1503.3 354.9L1579.1 309.7L1636.0 325.8L1662.6 380.6L1655.0 424.4L1660.7 461.0L1651.2 485.0L1656.9 506.6L1643.6 520.0L1647.4 538.6L1636.0 544.5L1645.5 551.4L1636.0 559.2L1624.6 572.0L1609.5 577.1L1598.1 591.8L1586.7 599.3L1579.1 605.6L1575.3 618.7L1569.6 631.2L1567.8 643.0ZM273.3 601.1L280.2 592.7L284.0 601.1L289.6 596.5L297.2 595.6L304.1 591.8L310.1 596.5L313.9 605.6L308.6 611.8L297.2 618.7L287.8 617.9L279.8 615.3L282.1 610.1L274.5 606.5L280.9 604.7ZM1638.7 601.1L1645.5 592.7L1649.3 601.1L1655.0 596.5L1662.6 595.6L1669.4 591.8L1675.5 596.5L1679.3 605.6L1673.9 611.8L1662.6 618.7L1653.1 617.9L1645.1 615.3L1647.4 610.1L1639.8 606.5L1646.3 604.7ZM345.8 713.4L352.2 711.6L357.9 709.2L365.5 708.6L370.4 706.2L368.5 704.4L371.9 697.6L366.6 695.1L365.5 690.6L360.9 684.8L359.1 678.2L354.1 675.5L357.2 670.0L358.3 664.4L350.3 663.7L353.4 657.2L346.5 657.2L343.9 665.1L342.0 672.1L344.6 678.9L347.3 680.2L346.5 683.5L352.2 682.8L354.1 688.7L354.1 692.6L348.4 693.2L349.6 698.2L345.8 702.6L352.2 704.4L354.1 705.6L348.4 707.4L343.9 712.8ZM1711.1 713.4L1717.6 711.6L1723.2 709.2L1730.8 708.6L1735.8 706.2L1733.9 704.4L1737.3 697.6L1732.0 695.1L1730.8 690.6L1726.3 684.8L1724.4 678.2L1719.5 675.5L1722.5 670.0L1723.6 664.4L1715.7 663.7L1718.7 657.2L1711.9 657.2L1709.2 665.1L1707.3 672.1L1710.0 678.9L1712.6 680.2L1711.9 683.5L1717.6 682.8L1719.5 688.7L1719.5 692.6L1713.8 693.2L1714.9 698.2L1711.1 702.6L1717.6 704.4L1719.5 705.6L1713.8 707.4L1709.2 712.8ZM342.0 700.1L342.7 691.9L344.6 685.5L341.6 680.9L337.1 680.2L333.3 685.5L327.6 687.4L329.5 693.8L326.4 701.3L329.5 704.4L335.2 703.2ZM1707.3 700.1L1708.1 691.9L1710.0 685.5L1706.9 680.9L1702.4 680.2L1698.6 685.5L1692.9 687.4L1694.8 693.8L1691.8 701.3L1694.8 704.4L1700.5 703.2ZM407.6 677.5L413.3 674.8L413.3 680.9L410.3 684.2L408.0 680.9ZM1772.9 677.5L1778.6 674.8L1778.6 680.9L1775.6 684.2L1773.3 680.9ZM402.7 678.9L406.5 678.9L406.1 682.2L403.4 681.5ZM1768.0 678.9L1771.8 678.9L1771.4 682.2L1768.8 681.5ZM412.9 777.0L424.7 776.0L422.8 783.2L412.9 778.9ZM1778.2 777.0L1790.0 776.0L1788.1 783.2L1778.2 778.9ZM396.6 762.2L402.3 761.7L402.3 771.2L397.7 772.1L397.4 767.2ZM1761.9 762.2L1767.6 761.7L1767.6 771.2L1763.1 772.1L1762.7 767.2ZM398.1 755.1L401.2 752.0L401.5 758.7L399.6 760.2ZM1763.4 755.1L1766.5 752.0L1766.9 758.7L1765.0 760.2ZM454.6 788.8L465.2 789.7L464.9 791.1L455.0 790.2ZM1820.0 788.8L1830.6 789.7L1830.2 791.1L1820.3 790.2ZM488.0 791.1L490.7 789.7L496.7 787.9L494.4 791.1L490.7 793.0ZM560.8 536.2L568.4 548.0L583.6 549.1L574.1 526.4L577.9 506.6L593.1 477.3L623.4 461.0L615.8 485.0L585.5 520.0L581.7 535.0L566.5 526.4ZM904.0 686.8L907.8 691.9L909.0 704.4L909.7 716.3L913.5 719.2L907.8 724.9L909.7 731.7L909.0 736.1L904.8 733.3L904.0 724.9L904.8 713.4L903.3 701.3L903.3 691.9ZM897.6 759.7L901.0 758.2L908.6 757.2L917.3 750.5L916.2 746.8L909.7 745.7L903.7 738.8L902.5 744.1L901.4 750.5L897.6 751.0L895.7 754.6ZM862.0 795.7L867.3 796.2L871.8 793.9L877.5 793.0L878.3 798.0L884.3 794.4L885.1 793.0L890.0 793.0L892.7 791.1L895.7 791.1L899.9 787.9L899.5 781.8L900.3 775.5L903.7 769.7L902.2 760.2L897.6 761.2L896.5 767.2L895.7 774.6L890.8 780.3L886.2 779.4L884.3 782.7L881.3 786.5L879.4 788.8L873.7 788.8L868.0 788.8L863.5 793.4ZM858.5 798.0L862.3 796.2L865.0 799.4L864.2 804.8L861.2 808.8L859.3 807.0L859.7 802.1L857.4 800.3ZM867.3 798.5L871.8 794.8L876.0 794.8L874.5 798.9L869.9 801.2ZM826.3 833.8L827.8 837.1L824.4 847.4L821.0 843.3L821.7 839.2ZM777.8 858.4L782.7 855.2L786.5 856.8L783.8 861.6L778.9 862.4ZM822.9 861.6L829.0 861.6L829.0 869.5L826.3 873.5L828.2 878.6L833.1 879.4L835.8 883.3L835.8 884.8L832.0 882.5L828.2 880.1L824.4 880.5L822.9 877.4L820.6 875.4L821.7 869.5ZM828.2 906.4L833.9 900.3L840.7 896.0L844.5 898.7L845.3 906.4L842.2 910.6L839.6 910.2L836.5 908.3L835.0 904.5L831.2 904.9ZM828.2 887.9L832.7 889.1L835.8 889.1L839.6 885.2L842.2 890.2L839.6 894.1L835.8 894.9L832.7 898.0L830.1 895.7L828.2 893.0ZM810.4 900.6L814.9 896.8L818.7 891.0L818.0 894.1L813.0 899.5ZM778.9 927.3L781.2 925.4L787.2 926.9L788.0 922.8L794.1 920.9L799.8 915.2L803.5 912.1L808.5 906.4L811.1 908.3L816.8 913.3L813.0 916.7L812.3 921.6L816.4 929.2L812.3 930.0L811.1 936.0L807.3 938.7L806.6 946.3L800.5 948.6L796.0 945.9L789.5 946.3L783.8 943.6L782.7 938.7L779.3 934.1ZM726.9 911.7L735.3 913.3L739.8 918.6L745.9 922.8L750.4 925.4L756.1 930.3L759.2 936.0L761.8 939.8L767.5 944.4L766.8 955.0L762.2 955.0L756.1 950.8L752.3 947.4L747.8 941.3L744.0 934.9L740.2 926.9L735.3 921.6L730.3 917.8ZM764.5 958.9L768.3 955.4L777.0 957.7L785.7 957.3L792.9 959.2L799.8 962.7L799.4 966.1L790.3 965.0L778.9 962.7L769.4 961.1ZM799.8 963.8L803.9 964.2L808.1 965.0L814.9 964.6L816.8 966.1L809.2 967.3L803.5 966.5ZM819.9 965.0L824.4 965.0L832.0 964.2L831.2 966.5L824.4 966.9L819.9 966.5ZM816.8 969.2L821.4 968.4L823.6 971.1L820.6 971.9ZM833.9 972.3L837.7 968.0L843.4 965.4L848.3 965.0L843.4 968.4L837.7 971.9ZM819.9 930.0L823.6 928.1L832.0 929.6L839.6 926.6L837.7 931.5L832.0 931.5L823.6 931.5L821.4 936.0L826.3 936.4L833.1 935.7L831.2 938.7L826.3 940.2L830.1 945.5L832.0 948.9L830.5 953.9L827.4 951.2L825.2 946.3L822.5 944.0L822.1 950.8L819.1 954.3L818.7 946.3L816.4 943.2L818.7 936.0ZM849.1 925.4L851.0 927.3L853.6 928.1L852.1 931.1L851.0 935.7L849.4 931.1L848.7 929.2ZM850.6 945.1L856.6 943.6L861.6 945.9L856.6 946.3L851.0 946.3ZM843.4 945.1L847.2 944.8L847.9 947.0L844.1 947.4ZM862.3 936.0L868.0 934.5L873.7 936.0L874.5 942.5L877.5 945.5L881.3 941.7L888.1 938.7L894.6 941.3L900.3 942.9L909.7 945.9L913.5 947.8L918.5 952.0L923.0 955.4L926.0 958.5L923.0 959.6L926.8 963.4L930.6 967.3L934.4 971.1L937.4 972.3L933.6 973.4L926.8 971.9L922.3 969.2L919.2 963.4L913.5 961.9L909.7 964.6L907.8 968.0L902.2 968.0L896.5 964.2L891.9 964.6L888.9 961.5L891.9 958.9L888.9 953.9L883.2 950.5L875.6 948.2L869.9 948.6L869.2 945.5L866.1 944.0L871.8 942.1L867.3 941.3L862.3 938.3ZM927.9 954.3L934.4 953.9L940.1 951.6L942.7 948.9L943.1 952.0L938.2 955.8L932.5 956.9ZM937.4 942.9L941.2 944.4L945.8 949.3L944.6 950.5L940.1 945.9ZM951.8 953.5L955.2 955.8L957.1 958.9L954.1 957.7ZM959.0 958.5L962.8 960.8L971.6 965.0L968.5 964.6L960.9 960.8ZM970.8 968.4L975.3 970.3L978.0 972.3L981.0 974.2L977.2 973.0L973.5 970.7ZM987.5 1010.8L993.2 1014.5L998.9 1019.8L996.2 1019.8L989.4 1014.5ZM997.3 990.6L999.6 992.5L1001.9 996.5L1000.0 995.7ZM1037.9 1000.4L1042.5 1000.0L1043.2 1002.8L1038.3 1003.2ZM1043.2 997.6L1048.2 995.3L1047.4 997.6ZM1020.5 1072.1L1026.5 1076.3L1031.1 1081.9L1033.0 1087.1L1040.6 1087.1L1042.5 1087.6L1040.2 1094.8L1036.8 1096.3L1034.9 1101.3L1030.3 1106.8L1027.7 1105.3L1030.0 1099.8L1025.4 1096.3L1028.1 1091.4L1028.4 1086.6L1026.2 1081.9L1021.6 1075.8ZM1020.5 1101.3L1026.5 1104.8L1025.4 1108.8L1020.9 1116.6L1015.2 1120.8L1013.3 1128.8L1008.3 1133.2L1003.8 1133.2L997.0 1129.9L998.9 1124.5L1004.6 1119.2L1012.1 1114.0L1015.9 1108.8L1018.6 1103.8ZM914.3 1102.3L921.1 1104.3L927.9 1103.3L927.9 1109.9L924.9 1115.5L920.4 1117.1L916.6 1111.4ZM905.9 973.8L909.7 980.8L910.5 987.8L916.6 990.2L917.3 996.5L920.0 1005.6L926.0 1009.2L930.6 1012.5L933.3 1019.8L937.4 1021.8L939.3 1026.8L945.8 1033.1L947.7 1043.7L945.8 1054.6L943.9 1063.5L939.3 1069.3L937.4 1074.9L934.4 1083.3L934.0 1087.1L926.8 1088.5L920.4 1093.9L915.4 1090.5L911.6 1091.4L905.9 1090.9L898.4 1089.0L895.3 1084.2L894.6 1078.6L889.6 1077.6L890.8 1073.9L888.1 1065.7L887.0 1070.3L885.1 1075.8L881.3 1073.9L878.3 1072.6L874.5 1065.7L869.9 1061.7L863.1 1059.0L854.7 1059.9L843.4 1062.6L835.8 1065.7L833.1 1069.8L820.6 1069.8L813.0 1074.9L805.4 1073.9L801.6 1071.6L804.3 1063.5L803.5 1056.8L801.3 1050.2L798.6 1041.5L796.0 1035.2L795.6 1027.6L797.1 1020.6L798.6 1017.7L803.5 1015.7L808.5 1012.9L816.8 1010.4L824.4 1008.8L829.3 1003.2L829.0 998.4L833.9 999.6L835.8 995.7L840.3 991.3L846.4 986.6L851.7 989.8L856.6 990.2L858.5 984.7L862.0 980.4L866.1 979.6L868.8 976.5L878.3 979.6L884.3 979.6L881.3 984.7L879.4 990.6L885.1 994.5L893.4 999.6L899.5 1000.4L902.2 992.5L902.5 984.7L904.0 976.9ZM668.1 896.0L671.9 898.7L675.7 904.5L675.0 908.3L671.2 910.4L668.5 908.3L667.8 901.8ZM140.6 727.2L143.6 722.1L147.4 710.4L153.9 703.8L155.0 710.4L151.2 714.6L158.8 716.3L162.6 722.1L165.6 727.8L162.6 732.8L155.0 731.1L153.1 727.2ZM1505.9 727.2L1509.0 722.1L1512.8 710.4L1519.2 703.8L1520.3 710.4L1516.6 714.6L1524.1 716.3L1527.9 722.1L1531.0 727.8L1527.9 732.8L1520.3 731.1L1518.4 727.2ZM43.5 847.8L50.7 843.3L60.2 842.9L71.6 848.3L79.2 852.7L84.1 854.8L81.1 856.0L70.8 856.0L73.5 853.1L67.8 849.5L58.3 847.4L52.6 845.4L48.8 846.6ZM1408.8 847.8L1416.0 843.3L1425.5 842.9L1436.9 848.3L1444.5 852.7L1449.4 854.8L1446.4 856.0L1436.1 856.0L1438.8 853.1L1433.1 849.5L1423.6 847.4L1417.9 845.4L1414.2 846.6ZM83.3 862.0L88.6 862.8L93.6 864.4L98.1 862.8L105.7 862.8L104.9 860.0L100.8 858.4L94.3 856.0L88.6 856.0L89.8 859.6L83.3 861.2ZM1448.7 862.0L1454.0 862.8L1458.9 864.4L1463.5 862.8L1471.0 862.8L1470.3 860.0L1466.1 858.4L1459.7 856.0L1454.0 856.0L1455.1 859.6L1448.7 861.2ZM68.5 862.0L73.5 862.0L76.5 863.6L71.6 864.4ZM1433.9 862.0L1438.8 862.0L1441.8 863.6L1436.9 864.4ZM110.6 861.6L116.3 862.0L115.9 863.6L110.6 863.6ZM1476.0 861.6L1481.7 862.0L1481.3 863.6L1476.0 863.6ZM1244.6 709.2L1253.0 712.2L1258.7 716.9L1262.4 722.7L1256.8 720.9L1249.2 714.6ZM1226.4 688.1L1231.0 688.7L1233.2 700.1L1229.1 695.1ZM1144.9 665.1L1152.5 659.4L1153.2 665.8L1147.5 670.0ZM133.0 590.8L128.5 582.1L122.8 577.1L113.3 568.8L110.6 561.4L109.9 554.8L105.7 549.1L100.0 542.2L95.5 532.6L88.6 525.1L77.3 520.0L62.1 510.7L43.1 510.7L28.0 520.0L31.8 544.5L45.0 555.9L58.3 558.1L69.7 553.7L79.2 572.0L88.6 577.1L90.5 588.9L84.8 602.9L71.6 602.9L71.6 611.8L84.8 610.1L94.3 618.7L105.7 626.3L115.2 632.0L117.1 627.1L107.6 617.0L113.3 620.4L120.1 625.5L119.0 616.2L115.2 610.1L108.4 597.4L115.2 598.4L120.9 602.9L124.7 605.6L130.4 598.4ZM1498.3 590.8L1493.8 582.1L1488.1 577.1L1478.6 568.8L1476.0 561.4L1475.2 554.8L1471.0 549.1L1465.4 542.2L1460.8 532.6L1454.0 525.1L1442.6 520.0L1427.4 510.7L1408.5 510.7L1393.3 520.0L1397.1 544.5L1410.4 555.9L1423.6 558.1L1435.0 553.7L1444.5 572.0L1454.0 577.1L1455.9 588.9L1450.2 602.9L1436.9 602.9L1436.9 611.8L1450.2 610.1L1459.7 618.7L1471.0 626.3L1480.5 632.0L1482.4 627.1L1472.9 617.0L1478.6 620.4L1485.5 625.5L1484.3 616.2L1480.5 610.1L1473.7 597.4L1480.5 598.4L1486.2 602.9L1490.0 605.6L1495.7 598.4ZM35.5 601.1L45.0 596.5L50.7 605.6L60.2 614.5L52.6 618.7L43.1 621.3L35.5 617.0L40.1 611.8ZM1400.9 601.1L1410.4 596.5L1416.0 605.6L1425.5 614.5L1417.9 618.7L1408.5 621.3L1400.9 617.0L1405.4 611.8ZM1287.1 555.9L1306.1 552.5L1321.2 568.8L1332.6 566.7L1345.9 561.4L1344.0 544.5L1332.6 526.4L1313.6 520.0L1287.1 516.0L1279.5 538.6ZM1256.8 532.6L1264.3 542.2L1275.7 538.6L1290.9 513.4L1275.7 499.6L1258.7 506.6ZM1353.5 564.6L1361.1 558.1L1368.6 564.6L1363.0 572.0ZM1344.0 532.6L1363.0 536.2L1363.0 513.4L1344.0 510.7ZM1139.2 854.8L1143.0 856.4L1140.7 859.6L1139.2 857.6ZM407.2 424.4L441.4 392.4L467.9 403.6L448.9 455.9L426.2 467.6L418.6 447.1ZM1772.6 424.4L1806.7 392.4L1833.2 403.6L1814.3 455.9L1791.5 467.6L1783.9 447.1ZM301.4 820.6L304.1 819.7L302.9 822.3ZM1666.7 820.6L1669.4 819.7L1668.3 822.3ZM568.0 884.8L572.2 884.8L570.3 886.0ZM764.9 939.8L768.3 938.7L770.5 943.6L767.5 944.4ZM733.8 927.7L736.8 929.6L735.3 930.7ZM919.2 744.1L928.7 738.8L926.8 740.4L920.0 745.2Z" fill="#f2efe9"/>
<path d="M301.0 850.3L316.2 850.3L316.2 843.3L320.0 841.3L320.0 830.8L332.5 830.8L332.5 823.6M1666.4 850.3L1681.5 850.3L1681.5 843.3L1685.3 841.3L1685.3 830.8L1697.8 830.8L1697.8 823.6M315.4 823.6L332.5 823.6L332.5 819.3L346.5 813.6L351.8 809.2L360.9 803.9L358.7 793.4L357.2 790.7M1680.8 823.6L1697.8 823.6L1697.8 819.3L1711.9 813.6L1717.2 809.2L1726.3 803.9L1724.0 793.4L1722.5 790.7M332.5 825.3L347.3 835.0L340.8 835.0L344.6 869.5L345.4 873.5L327.6 873.9L321.9 873.1L319.2 876.2L312.4 869.1L302.9 871.5M1697.8 825.3L1712.6 835.0L1706.2 835.0L1710.0 869.5L1710.7 873.5L1692.9 873.9L1687.2 873.1L1684.6 876.2L1677.7 869.1L1668.3 871.5M347.3 835.0L370.1 851.1L376.9 858.8L381.4 859.2L381.4 868.4L378.8 873.9L369.3 875.4L366.3 875.4L357.9 878.6L350.3 882.5L344.6 893.3M1712.6 835.0L1735.4 851.1L1742.2 858.8L1746.8 859.2L1746.8 868.4L1744.1 873.9L1734.6 875.4L1731.6 875.4L1723.2 878.6L1715.7 882.5L1710.0 893.3M378.0 859.6L388.3 857.6L411.0 841.3L403.4 837.1L401.5 829.6L403.0 821.0L401.5 812.8L393.9 800.3L397.0 793.0L398.1 782.2M1743.3 859.6L1753.6 857.6L1776.3 841.3L1768.8 837.1L1766.9 829.6L1768.4 821.0L1766.9 812.8L1759.3 800.3L1762.3 793.0L1763.4 782.2M401.5 812.8L404.6 806.1L409.1 799.8M1766.9 812.8L1769.9 806.1L1774.4 799.8M460.3 806.6L460.3 847.4L505.4 847.4M1825.6 806.6L1825.6 847.4L1870.8 847.4M460.3 847.4L460.3 855.6L456.5 855.6L456.5 857.6L426.2 841.3L422.4 843.3L419.4 845.0L411.0 841.3M1825.6 847.4L1825.6 855.6L1821.9 855.6L1821.9 857.6L1791.5 841.3L1787.7 843.3L1784.7 845.0L1776.3 841.3M422.4 843.3L424.3 851.5L424.3 868.0L416.7 877.4L417.1 880.5L414.8 881.3L399.6 884.0L392.0 883.3L381.4 881.3L379.2 888.3M1787.7 843.3L1789.6 851.5L1789.6 868.0L1782.0 877.4L1782.4 880.5L1780.1 881.3L1765.0 884.0L1757.4 883.3L1746.8 881.3L1744.5 888.3M456.5 857.6L456.5 872.7L450.8 879.4L448.9 884.4L452.4 891.0L455.0 896.0M1821.9 857.6L1821.9 872.7L1816.2 879.4L1814.3 884.4L1817.7 891.0L1820.3 896.0M495.2 807.9L497.9 815.8M410.3 999.2L418.6 1000.0L433.8 1000.0L453.9 1000.8L461.1 1001.6M1775.6 999.2L1783.9 1000.0L1799.1 1000.0L1819.2 1000.8L1826.4 1001.6M441.4 1045.4L441.4 1030.1L441.4 1018.6L445.1 1018.6L445.1 1003.6L453.9 1000.8M1806.7 1045.4L1806.7 1030.1L1806.7 1018.6L1810.5 1018.6L1810.5 1003.6L1819.2 1000.8M428.1 1046.3L441.4 1045.4L444.0 1038.6L452.7 1032.2L462.2 1033.9L467.9 1025.1L477.0 1019.4L484.2 1020.2L486.9 1028.9L486.5 1038.6L490.3 1039.0M1793.4 1046.3L1806.7 1045.4L1809.3 1038.6L1818.1 1032.2L1827.5 1033.9L1833.2 1025.1L1842.3 1019.4L1849.5 1020.2L1852.2 1028.9L1851.8 1038.6L1855.6 1039.0M461.1 1001.6L467.9 1002.4L477.0 1019.4M1826.4 1001.6L1833.2 1002.4L1842.3 1019.4M467.9 1002.4L480.8 992.9L480.8 990.6L490.7 986.6L489.9 984.7L491.8 969.2M1833.2 1002.4L1846.1 992.9L1846.1 990.6L1856.0 986.6L1855.2 984.7L1857.1 969.2M456.5 982.7L456.5 975.0L448.9 975.0L448.9 982.7L456.5 982.7L453.9 1000.8M1821.9 982.7L1821.9 975.0L1814.3 975.0L1814.3 982.7L1821.9 982.7L1819.2 1000.8M411.8 955.0L428.5 955.4L432.2 963.8L448.9 961.5L448.9 975.0M1777.1 955.0L1793.8 955.4L1797.6 963.8L1814.3 961.5L1814.3 975.0M518.7 973.0L509.6 976.1L498.2 977.3L496.7 976.9M95.1 887.9L88.6 893.0L90.5 900.6L92.4 906.4L100.0 906.4L109.5 909.4L108.4 917.8L110.3 925.4L111.8 928.4M1460.4 887.9L1454.0 893.0L1455.9 900.6L1457.8 906.4L1465.4 906.4L1474.8 909.4L1473.7 917.8L1475.6 925.4L1477.1 928.4M111.8 928.4L100.8 926.6L100.0 933.0L102.3 936.8L100.0 948.9L89.0 952.7L84.8 960.8L88.6 968.8L98.1 969.2L97.7 975.0L101.5 975.0M1477.1 928.4L1466.1 926.6L1465.4 933.0L1467.6 936.8L1465.4 948.9L1454.4 952.7L1450.2 960.8L1454.0 968.8L1463.5 969.2L1463.1 975.0L1466.9 975.0M66.3 927.7L73.5 931.5L79.9 933.4L78.8 938.7L68.5 945.9L65.9 952.0L61.0 945.9M1431.6 927.7L1438.8 931.5L1445.3 933.4L1444.1 938.7L1433.9 945.9L1431.2 952.0L1426.3 945.9M79.9 933.4L86.4 937.9L89.0 942.1L99.6 943.2L100.0 948.9M1445.3 933.4L1451.7 937.9L1454.4 942.1L1465.0 943.2L1465.4 948.9M101.5 975.0L104.9 981.2L103.8 991.7L101.9 1000.4L107.6 1008.4L106.8 1016.5L111.4 1021.8L114.4 1017.7L121.6 1021.8L128.1 1019.4L131.1 1009.2L144.8 1009.6L144.0 999.6L137.2 995.7L136.0 985.9L117.5 970.0L101.5 975.0M1466.9 975.0L1470.3 981.2L1469.1 991.7L1467.2 1000.4L1472.9 1008.4L1472.2 1016.5L1476.7 1021.8L1479.8 1017.7L1487.0 1021.8L1493.4 1019.4L1496.5 1009.2L1510.1 1009.6L1509.3 999.6L1502.5 995.7L1501.4 985.9L1482.8 970.0L1466.9 975.0M98.9 1003.6L101.9 1000.4M1464.2 1003.6L1467.2 1000.4M111.4 1021.8L106.1 1028.9L105.7 1039.4L100.4 1053.2L98.1 1068.0L100.0 1079.5L96.2 1093.9L93.2 1108.8L93.6 1124.5L90.5 1143.9L87.5 1155.6L91.3 1162.8L103.8 1165.9L106.1 1166.5M1476.7 1021.8L1471.4 1028.9L1471.0 1039.4L1465.7 1053.2L1463.5 1068.0L1465.4 1079.5L1461.6 1093.9L1458.5 1108.8L1458.9 1124.5L1455.9 1143.9L1452.8 1155.6L1456.6 1162.8L1469.1 1165.9L1471.4 1166.5M105.3 1169.0L105.3 1183.2M1470.7 1169.0L1470.7 1183.2M128.1 1019.4L137.9 1026.8L147.0 1032.7L143.3 1040.3L153.1 1040.7L158.4 1033.5L159.6 1026.8L154.3 1020.2L145.5 1019.0L144.8 1009.6M1493.4 1019.4L1503.3 1026.8L1512.4 1032.7L1508.6 1040.3L1518.4 1040.7L1523.8 1033.5L1524.9 1026.8L1519.6 1020.2L1510.9 1019.0L1510.1 1009.6M153.1 1040.7L147.0 1053.2L144.8 1065.7L144.0 1070.3M1518.4 1040.7L1512.4 1053.2L1510.1 1065.7L1509.3 1070.3M147.0 1053.2L155.0 1056.3L163.0 1068.9M1512.4 1053.2L1520.3 1056.3L1528.3 1068.9M158.4 1033.5L161.8 1039.0L153.9 1045.0L147.0 1053.2M1523.8 1033.5L1527.2 1039.0L1519.2 1045.0L1512.4 1053.2M138.7 901.4L132.6 910.6L135.3 913.3L137.9 914.0L138.3 928.1L142.1 928.4L151.2 925.8L158.8 924.3L166.0 923.9L169.4 917.4M1504.0 901.4L1498.0 910.6L1500.6 913.3L1503.3 914.0L1503.7 928.1L1507.4 928.4L1516.6 925.8L1524.1 924.3L1531.3 923.9L1534.8 917.4M135.3 913.3L122.8 918.2L120.9 927.3L111.8 928.4M1500.6 913.3L1488.1 918.2L1486.2 927.3L1477.1 928.4M148.6 910.6L145.5 917.8L151.2 925.8M1513.9 910.6L1510.9 917.8L1516.6 925.8M160.7 911.3L158.8 924.3M1526.0 911.3L1524.1 924.3M1196.1 560.3L1196.1 644.5L1203.7 646.8L1209.4 655.0L1216.9 648.3L1224.9 658.7L1231.0 671.4L1237.8 675.5L1237.0 684.2M-101.0 719.2L4.4 719.2L6.0 717.5L16.6 723.2L26.1 724.9L30.2 723.2L43.9 731.1L48.4 735.5L52.6 739.9L54.1 748.9L50.3 757.2L65.9 754.1L65.5 749.9L74.2 748.9L81.1 741.5L94.3 741.5L98.9 735.0L103.1 728.3L108.4 730.0L108.4 737.7L111.4 742.0M1264.3 719.2L1369.8 719.2L1371.3 717.5L1381.9 723.2L1391.4 724.9L1395.6 723.2L1409.2 731.1L1413.8 735.5L1417.9 739.9L1419.5 748.9L1415.7 757.2L1431.2 754.1L1430.8 749.9L1439.6 748.9L1446.4 741.5L1459.7 741.5L1464.2 735.0L1468.4 728.3L1473.7 730.0L1473.7 737.7L1476.7 742.0M1286.7 802.5L1295.8 801.6L1309.9 807.9L1320.5 807.9L1320.5 805.7L1326.9 805.7L1334.5 815.4L1339.8 818.0L1346.3 814.5L1353.5 824.5L1362.2 831.2M1381.2 877.4L1381.2 874.3L1383.1 871.1L1388.0 871.1L1385.7 866.8L1385.7 864.4L1392.9 864.4L1392.9 871.9L1393.7 871.9M1392.9 864.4L1395.9 861.6M1389.1 880.5L1392.2 877.8L1392.9 875.4L1396.3 872.7M1397.8 881.7L1398.2 880.1L1392.2 877.8M34.4 883.3L36.7 880.1L40.1 879.8L43.5 876.2L50.0 875.4M1399.7 883.3L1402.0 880.1L1405.4 879.8L1408.8 876.2L1415.3 875.4M40.5 890.6L44.3 891.0L48.1 891.4M1405.8 890.6L1409.6 891.0L1413.4 891.4M51.1 902.2L51.1 896.8L52.2 896.4M1416.4 902.2L1416.4 896.8L1417.6 896.4M72.0 900.3L72.7 902.9L70.1 905.6M1437.3 900.3L1438.0 902.9L1435.4 905.6M541.9 722.1L543.8 713.4L555.1 703.2L574.1 709.2L589.3 709.2L598.7 707.4L596.8 698.2L596.8 688.7L612.0 685.5L627.2 680.2L634.8 687.4L646.2 691.3L657.5 688.7L668.9 707.4L680.3 707.4L696.6 718.1M696.6 718.1L703.0 713.4L714.4 709.2L725.8 713.4L737.2 712.2L738.3 701.3L752.3 705.6L753.5 710.4L769.4 711.6L786.5 716.9L796.0 713.4L808.1 714.6M808.1 714.6L819.9 716.3L826.3 693.2L839.6 693.8L849.1 713.4L860.4 719.8L876.4 723.2L869.9 741.5L863.1 742.0L862.3 752.0L860.8 755.1M696.6 718.1L699.2 722.1L706.8 726.1L710.6 739.9L727.7 745.7L731.5 753.6L746.7 754.1L763.7 759.2L784.6 753.6L790.3 741.5L804.3 739.3L819.9 732.2L805.4 726.1L808.1 714.6M696.6 718.1L690.5 728.9L680.3 729.4L677.6 738.8L669.7 741.5L670.0 756.1L657.5 762.2L646.2 765.7L645.0 769.7M670.0 756.1L648.0 751.0L634.8 754.1L626.1 763.7L617.7 761.7L596.8 746.8L587.7 738.2L577.9 741.5L577.9 760.7L570.3 755.6L564.6 758.2M617.7 761.7L617.7 777.0L610.1 784.1L597.6 788.4L598.0 783.7L585.5 778.4L574.1 777.5L569.9 780.3M645.0 769.7L636.7 769.2L631.0 766.2L628.3 769.7L621.1 771.2L623.4 780.8L634.8 775.1L637.0 783.2L649.6 780.8M610.1 784.1L623.4 780.8M597.6 788.4L596.1 795.7L596.8 807.5L596.5 814.5L604.4 816.3L616.9 814.1L618.5 808.3L628.3 805.2L631.0 798.9L635.2 795.7L637.0 783.2M596.5 814.5L605.2 825.7L599.1 834.2M535.4 768.7L532.4 770.2L535.4 780.8L540.0 787.4L538.1 794.4L546.8 805.7L546.4 809.2L549.8 814.1M535.4 780.8L526.3 781.3L512.7 783.2L504.7 785.5L502.0 787.4M526.3 781.3L521.8 792.1L512.7 798.5L505.1 803.4L500.5 801.6M512.7 798.5L514.2 804.3L505.8 807.0L509.6 811.4L507.7 813.6L502.4 817.1L497.9 815.8M514.2 804.3L525.2 808.8L535.0 817.1L541.9 817.6L546.4 813.2L548.3 819.7M562.7 859.6L576.7 855.6L574.9 844.6L565.0 843.7L561.2 837.9M562.7 859.6L551.3 861.2L541.5 866.8L530.1 865.6L527.8 869.9M576.7 855.6L566.9 868.7M474.7 565.7L467.9 557.0L463.0 564.6L459.6 570.9L443.6 565.7L442.5 572.0L434.1 572.0L426.9 582.1L420.5 595.6L420.9 605.6L411.8 617.9L411.8 639.1L413.3 643.0L410.3 647.6L408.0 653.6M1840.1 565.7L1833.2 557.0L1828.3 564.6L1824.9 570.9L1809.0 565.7L1807.8 572.0L1799.5 572.0L1792.3 582.1L1785.8 595.6L1786.2 605.6L1777.1 617.9L1777.1 639.1L1778.6 643.0L1775.6 647.6L1773.3 653.6M443.6 565.7L455.4 578.1L454.6 594.6L457.3 598.4M1809.0 565.7L1820.7 578.1L1820.0 594.6L1822.6 598.4M474.7 565.7L479.3 580.1L475.5 588.0L479.3 599.3L478.1 607.4L485.0 623.8L470.9 642.2M1840.1 565.7L1844.6 580.1L1840.8 588.0L1844.6 599.3L1843.5 607.4L1850.3 623.8L1836.3 642.2M472.1 651.3L469.4 665.1L472.5 674.8L482.7 678.2L483.1 690.0L489.5 692.6L484.2 700.7L494.4 699.5L500.5 711.0L509.6 714.0L517.6 715.7L516.1 726.1L510.4 730.0M1837.4 651.3L1834.8 665.1L1837.8 674.8L1848.0 678.2L1848.4 690.0L1854.9 692.6L1849.5 700.7L1859.8 699.5L1865.8 711.0L1875.0 714.0L1882.9 715.7L1881.4 726.1L1875.7 730.0M455.0 704.4L455.0 697.6L456.1 688.7L463.3 682.8L466.4 677.5L472.5 674.8M1820.3 704.4L1820.3 697.6L1821.5 688.7L1828.7 682.8L1831.7 677.5L1837.8 674.8M455.0 704.4L467.9 703.8L481.2 705.6L484.2 700.7M1820.3 704.4L1833.2 703.8L1846.5 705.6L1849.5 700.7M419.4 689.4L421.3 701.3L422.4 707.4L411.8 711.6L417.8 720.4L414.8 727.8L405.3 727.8L401.9 727.8L394.3 727.2L396.6 719.2L389.8 716.3L388.3 708.6L392.0 700.1L392.8 693.2M1784.7 689.4L1786.6 701.3L1787.7 707.4L1777.1 711.6L1783.2 720.4L1780.1 727.8L1770.7 727.8L1767.2 727.8L1759.7 727.2L1761.9 719.2L1755.1 716.3L1753.6 708.6L1757.4 700.1L1758.1 693.2M422.4 707.4L436.8 716.3L450.8 718.6L456.5 710.4L455.0 704.4M1787.7 707.4L1802.1 716.3L1816.2 718.6L1821.9 710.4L1820.3 704.4M450.8 718.6L449.7 722.7L459.9 726.6L466.4 723.2L472.5 738.8L478.1 739.9M1816.2 718.6L1815.0 722.7L1825.3 726.6L1831.7 723.2L1837.8 738.8L1843.5 739.9M389.8 716.3L381.4 713.4L375.0 706.8M1755.1 716.3L1746.8 713.4L1740.3 706.8M394.3 727.2L388.3 735.0L392.0 736.6L390.5 740.9L394.7 746.3L393.9 747.8M1759.7 727.2L1753.6 735.0L1757.4 736.6L1755.9 740.9L1760.0 746.3L1759.3 747.8M358.7 749.9L368.2 753.6L377.6 755.1M1724.0 749.9L1733.5 753.6L1743.0 755.1M332.1 757.7L342.0 759.2L339.0 767.2L337.1 780.8M1697.5 757.7L1707.3 759.2L1704.3 767.2L1702.4 780.8M417.5 738.2L417.5 733.3L426.6 731.1L429.6 721.5L436.8 716.3M1782.8 738.2L1782.8 733.3L1791.9 731.1L1794.9 721.5L1802.1 716.3M426.6 731.1L428.1 733.3L437.2 736.6L442.5 735.0L449.7 722.7M1791.9 731.1L1793.4 733.3L1802.5 736.6L1807.8 735.0L1815.0 722.7M437.2 736.6L437.6 742.0L439.1 749.4L442.9 753.1L443.6 757.7L445.1 763.2L441.4 768.7M1802.5 736.6L1802.9 742.0L1804.4 749.4L1808.2 753.1L1809.0 757.7L1810.5 763.2L1806.7 768.7M442.5 735.0L446.7 742.0L451.2 745.7L450.5 755.6L452.7 760.7L465.2 758.7L464.1 760.7L465.6 762.7M1807.8 735.0L1812.0 742.0L1816.5 745.7L1815.8 755.6L1818.1 760.7L1830.6 758.7L1829.4 760.7L1831.0 762.7M451.2 745.7L458.4 748.4L467.9 746.3L474.0 748.4M1816.5 745.7L1823.8 748.4L1833.2 746.3L1839.3 748.4M465.2 758.7L471.7 757.2M1830.6 758.7L1837.0 757.2M522.9 759.7L530.5 761.7L536.2 760.7L541.9 757.7L549.4 758.2M530.5 761.7L531.2 766.7L535.4 768.7M517.2 749.9L526.7 751.0L534.3 753.6L541.9 757.7M735.3 821.0L739.8 831.7L735.7 839.2L741.7 847.0L749.3 850.7L752.7 845.8L764.9 842.1L770.2 844.2L775.1 849.5M749.3 850.7L745.1 854.3L737.2 856.4L734.9 861.6L740.6 869.9L737.9 875.4L741.7 887.2L740.2 893.3M745.1 854.3L748.6 865.6L752.7 862.8L759.9 862.4L763.0 869.9L766.0 877.8L754.6 878.2L755.8 888.3M752.7 845.8L759.9 853.5L764.5 860.8L773.2 877.4L773.2 886.0L766.8 888.7L761.8 893.3M766.0 877.8L773.2 877.4M745.1 908.7L748.9 911.3L752.7 909.4M837.3 766.7L846.8 758.2L852.1 757.2L860.8 755.1M843.7 778.4L852.5 774.1M781.2 925.4L789.5 929.2L798.6 927.7L804.3 917.1L811.5 917.1M900.3 942.9L900.3 967.7M699.6 822.7L702.3 826.2L714.4 827.0L712.9 823.2L727.3 818.0L734.5 821.4M699.6 822.7L691.7 822.7L684.1 818.4L672.7 812.8L669.3 818.9L681.4 825.3L690.9 828.3L699.6 829.1L699.6 822.7M672.7 812.8L664.0 807.0L665.1 794.4L660.6 788.8L649.6 780.8M624.2 840.4L634.8 837.5L629.1 825.7L638.2 822.7L648.0 809.2L646.2 800.3L660.6 788.8M699.6 829.1L703.0 829.1L706.1 833.8L715.9 835.0L711.4 840.4L715.6 840.4L716.7 850.3L715.6 852.7M703.0 847.4L702.3 837.9L699.6 831.7L699.6 829.1M716.7 850.3L719.3 839.2L724.3 834.2L733.4 823.6L735.3 821.0" fill="none" stroke="#b497bd" stroke-opacity="0.5" stroke-width="1.1" stroke-linejoin="round"/>
<path d="M471.7 759.7L471.7 754.6L474.0 746.8L478.1 739.9L481.9 733.3L486.9 733.3L492.9 736.1L488.8 739.3L492.2 743.6L494.4 744.7L499.4 742.0L503.9 739.9L498.2 735.0L499.0 732.8L509.6 729.4L513.4 729.4L508.9 736.1L507.7 739.9L505.4 742.0L507.7 743.1L515.3 748.4L522.9 754.6L522.9 759.7L516.1 762.2L505.8 761.7L498.2 757.2L492.6 757.2L485.0 761.2L476.2 761.7ZM1837.0 759.7L1837.0 754.6L1839.3 746.8L1843.5 739.9L1847.3 733.3L1852.2 733.3L1858.3 736.1L1854.1 739.3L1857.5 743.6L1859.8 744.7L1864.7 742.0L1869.3 739.9L1863.6 735.0L1864.3 732.8L1875.0 729.4L1878.7 729.4L1874.2 736.1L1873.1 739.9L1870.8 742.0L1873.1 743.1L1880.6 748.4L1888.2 754.6L1888.2 759.7L1881.4 762.2L1871.2 761.7L1863.6 757.2L1857.9 757.2L1850.3 761.2L1841.6 761.7ZM467.9 764.7L471.7 762.2L476.6 763.2L474.7 765.2ZM1833.2 764.7L1837.0 762.2L1842.0 763.2L1840.1 765.2ZM553.2 733.3L558.9 730.6L566.5 731.7L566.5 739.9L560.1 741.5L558.9 745.7L556.3 745.2L558.2 752.0L563.9 754.6L565.7 759.7L572.2 759.7L565.7 762.2L569.5 772.1L569.5 780.8L562.7 782.7L556.3 779.9L551.3 775.1L552.5 770.7L553.2 764.7L549.4 757.2L545.6 752.0L545.6 744.1L543.0 742.5L549.4 736.1ZM587.7 737.2L591.5 735.0L590.8 741.5L587.4 743.6ZM759.2 703.8L765.6 701.3L775.1 691.9L781.9 678.9L778.9 676.8L771.3 690.0L765.6 697.0ZM644.3 738.8L649.9 731.7L665.1 731.7L665.1 734.4L651.8 735.0L646.2 741.5ZM480.0 644.5L483.1 635.2L489.9 637.6L488.8 645.3L484.2 647.6ZM1845.4 644.5L1848.4 635.2L1855.2 637.6L1854.1 645.3L1849.5 647.6ZM496.3 639.1L500.1 627.1L503.2 632.8L501.3 639.9ZM486.1 934.9L488.8 931.9L494.4 931.9L495.6 936.8L492.6 942.5L486.9 942.5L485.7 938.7ZM476.6 945.9L478.5 952.0L482.3 959.6L483.8 966.1L481.2 965.4L477.4 957.7L475.9 950.1ZM1842.0 945.9L1843.9 952.0L1847.6 959.6L1849.2 966.1L1846.5 965.4L1842.7 957.7L1841.2 950.1ZM494.4 969.2L497.1 975.0L498.2 982.7L499.0 988.2L496.7 987.4L495.2 978.8L494.1 973.0ZM16.6 732.2L24.2 726.1L29.9 720.9L39.3 722.1L44.3 730.6L43.1 733.3L35.5 733.3L26.1 731.7ZM1381.9 732.2L1389.5 726.1L1395.2 720.9L1404.7 722.1L1409.6 730.6L1408.5 733.3L1400.9 733.3L1391.4 731.7ZM32.5 757.2L31.8 746.8L35.5 737.2L41.2 736.6L42.0 741.5L38.2 749.4L36.3 758.2ZM1397.8 757.2L1397.1 746.8L1400.9 737.2L1406.6 736.6L1407.3 741.5L1403.5 749.4L1401.6 758.2ZM45.0 736.6L54.5 736.1L62.1 738.8L62.1 743.6L56.4 744.1L53.4 751.5L48.8 747.8L49.6 741.5ZM1410.4 736.6L1419.8 736.1L1427.4 738.8L1427.4 743.6L1421.7 744.1L1418.7 751.5L1414.2 747.8L1414.9 741.5ZM49.6 758.7L52.6 756.1L62.1 753.6L65.9 753.1L64.0 755.1L56.4 759.7ZM1414.9 758.7L1417.9 756.1L1427.4 753.6L1431.2 753.1L1429.3 755.1L1421.7 759.7ZM63.2 750.5L69.7 747.3L76.1 746.3L76.1 749.4L69.7 750.5ZM1428.6 750.5L1435.0 747.3L1441.5 746.3L1441.5 749.4L1435.0 750.5ZM1355.4 690.0L1361.1 689.4L1364.8 704.4L1363.7 711.0L1357.3 701.3ZM1287.1 639.1L1294.7 628.7L1306.1 624.6L1315.5 624.6L1308.0 632.8L1298.5 637.6ZM1256.8 602.9L1264.3 591.8L1275.7 588.0L1283.3 593.7L1273.8 605.6L1266.2 605.6ZM1308.0 656.5L1317.4 649.8L1328.8 652.1L1317.4 654.3ZM100.0 991.7L101.9 995.3L104.6 995.7L102.7 991.7ZM1465.4 991.7L1467.2 995.3L1469.9 995.7L1468.0 991.7ZM39.3 887.5L43.1 890.2L40.9 890.2ZM1404.7 887.5L1408.5 890.2L1406.2 890.2ZM94.0 891.8L95.8 893.0L96.2 896.8L93.2 898.0L91.7 894.9ZM1459.3 891.8L1461.2 893.0L1461.6 896.8L1458.5 898.0L1457.0 894.9Z" fill="#aad3df"/></g>
<path d="M365.5 531V1183M706.8 531V1183M1048.2 531V1183M1389.5 531V1183M1730.8 531V1183M40 591.7H1850M40 933.0H1850" fill="none" stroke="#c9d3d3" stroke-opacity="0.55" stroke-width="1"/>
<circle cx="945.4" cy="1198" r="34" fill="#eef1b2"/>
<g stroke="#000" stroke-width="0.9">
<circle cx="718.0" cy="545.3" r="9.5" fill="#ffff00"/>
<circle cx="652.6" cy="556.3" r="9.5" fill="#ffff00"/>
<circle cx="952.7" cy="566.8" r="9.5" fill="#ffff00"/>
<circle cx="455.4" cy="567.0" r="9.5" fill="#ffff00"/>
<circle cx="857.9" cy="577.5" r="9.5" fill="#ffff00"/>
<circle cx="692.9" cy="582.8" r="9.5" fill="#ffff00"/>
<circle cx="1074.1" cy="586.6" r="9.5" fill="#ffff00"/>
<circle cx="1255.5" cy="586.6" r="9.5" fill="#990099"/>
<circle cx="936.7" cy="599.1" r="9.5" fill="#ffff00"/>
<circle cx="300.8" cy="605.3" r="9.5" fill="#ffff00"/>
<circle cx="1142.2" cy="605.3" r="9.5" fill="#990099"/>
<circle cx="572.8" cy="605.6" r="9.5" fill="#ffff00"/>
<circle cx="611.4" cy="605.6" r="9.5" fill="#ffff00"/>
<circle cx="675.2" cy="605.6" r="9.5" fill="#ffff00"/>
<circle cx="693.9" cy="614.8" r="9.5" fill="#ffff00"/>
<circle cx="1536.6" cy="614.8" r="9.5" fill="#990099"/>
<circle cx="1186.0" cy="618.8" r="9.5" fill="#990099"/>
<circle cx="459.4" cy="632.1" r="9.5" fill="#ffff00"/>
<circle cx="599.1" cy="632.1" r="9.5" fill="#ffff00"/>
<circle cx="857.9" cy="632.1" r="9.5" fill="#ffff00"/>
<circle cx="395.4" cy="640.1" r="9.5" fill="#ffff00"/>
<circle cx="997.8" cy="640.1" r="9.5" fill="#ffff00"/>
<circle cx="421.7" cy="646.6" r="9.5" fill="#ffff00"/>
<circle cx="571.3" cy="650.6" r="9.5" fill="#ffff00"/>
<circle cx="1123.4" cy="650.9" r="9.5" fill="#cccccc"/>
<circle cx="463.4" cy="654.6" r="9.5" fill="#ffff00"/>
<circle cx="1217.7" cy="654.6" r="9.5" fill="#cccccc"/>
<circle cx="563.1" cy="665.4" r="9.5" fill="#ffff00"/>
<circle cx="455.4" cy="669.1" r="9.5" fill="#ffff00"/>
<circle cx="547.3" cy="669.1" r="9.5" fill="#ffff00"/>
<circle cx="350.1" cy="669.4" r="9.5" fill="#990099"/>
<circle cx="962.0" cy="669.4" r="9.5" fill="#cccccc"/>
<circle cx="553.0" cy="675.9" r="9.5" fill="#ffff00"/>
<circle cx="401.9" cy="676.4" r="9.5" fill="#ffff00"/>
<circle cx="507.5" cy="676.4" r="9.5" fill="#ffff00"/>
<circle cx="839.3" cy="676.4" r="9.5" fill="#ffff00"/>
<circle cx="544.8" cy="679.2" r="9.5" fill="#ffff00"/>
<circle cx="1246.4" cy="680.1" r="9.5" fill="#ffff00"/>
<circle cx="1236.8" cy="682.2" r="9.5" fill="#ffff00"/>
<circle cx="455.4" cy="682.9" r="9.5" fill="#ffff00"/>
<circle cx="471.0" cy="689.2" r="9.5" fill="#ffff00"/>
<circle cx="903.2" cy="693.7" r="9.5" fill="#ffff00"/>
<circle cx="382.9" cy="695.9" r="9.5" fill="#ffff00"/>
<circle cx="536.8" cy="696.2" r="9.5" fill="#ffff00"/>
<circle cx="584.6" cy="696.2" r="9.5" fill="#ffff00"/>
<circle cx="1229.1" cy="696.3" r="9.5" fill="#990099"/>
<circle cx="333.8" cy="696.4" r="9.5" fill="#990099"/>
<circle cx="1241.3" cy="698.2" r="9.5" fill="#ffff00"/>
<circle cx="1250.2" cy="698.2" r="9.5" fill="#ffff00"/>
<circle cx="386.6" cy="698.4" r="9.5" fill="#ffff00"/>
<circle cx="1290.0" cy="698.4" r="9.5" fill="#990099"/>
<circle cx="348.8" cy="701.2" r="9.5" fill="#ffff00"/>
<circle cx="364.6" cy="701.4" r="9.5" fill="#ffff00"/>
<circle cx="401.6" cy="701.4" r="9.5" fill="#ffff00"/>
<circle cx="440.7" cy="701.4" r="9.5" fill="#ffff00"/>
<circle cx="352.6" cy="701.4" r="9.5" fill="#990099"/>
<circle cx="713.7" cy="701.4" r="9.5" fill="#ffff00"/>
<circle cx="724.5" cy="701.4" r="9.5" fill="#ffff00"/>
<circle cx="773.8" cy="701.4" r="9.5" fill="#ffff00"/>
<circle cx="1246.4" cy="701.4" r="9.5" fill="#ffff00"/>
<circle cx="417.9" cy="704.7" r="9.5" fill="#ffff00"/>
<circle cx="1248.3" cy="707.1" r="9.5" fill="#ffff00"/>
<circle cx="1268.1" cy="708.4" r="9.5" fill="#ffff00"/>
<circle cx="345.8" cy="711.7" r="9.5" fill="#990099"/>
<circle cx="421.9" cy="712.7" r="9.5" fill="#ffff00"/>
<circle cx="1269.4" cy="712.9" r="9.5" fill="#ffff00"/>
<circle cx="1303.8" cy="713.3" r="9.5" fill="#ffff00"/>
<circle cx="1290.0" cy="716.1" r="9.5" fill="#ffffff"/>
<circle cx="1264.9" cy="716.1" r="9.5" fill="#ffff00"/>
<circle cx="1249.6" cy="716.1" r="9.5" fill="#cccccc"/>
<circle cx="848.6" cy="716.4" r="9.5" fill="#ffff00"/>
<circle cx="908.9" cy="716.4" r="9.5" fill="#990099"/>
<circle cx="1266.2" cy="718.6" r="9.5" fill="#ffff00"/>
<circle cx="490.0" cy="720.2" r="9.5" fill="#ffff00"/>
<circle cx="1256.6" cy="723.7" r="9.5" fill="#cccccc"/>
<circle cx="1259.8" cy="725.0" r="9.5" fill="#ffff00"/>
<circle cx="352.6" cy="725.2" r="9.5" fill="#990099"/>
<circle cx="372.6" cy="725.2" r="9.5" fill="#990099"/>
<circle cx="835.3" cy="725.5" r="9.5" fill="#ffff00"/>
<circle cx="881.9" cy="727.0" r="9.5" fill="#ffff00"/>
<circle cx="1320.8" cy="730.7" r="9.5" fill="#990099"/>
<circle cx="1340.9" cy="730.7" r="9.5" fill="#990099"/>
<circle cx="440.7" cy="731.0" r="9.5" fill="#ffff00"/>
<circle cx="763.3" cy="731.0" r="9.5" fill="#ffff00"/>
<circle cx="1341.2" cy="733.3" r="9.5" fill="#990099"/>
<circle cx="397.9" cy="733.5" r="9.5" fill="#990099"/>
<circle cx="1261.7" cy="733.9" r="9.5" fill="#ffff00"/>
<circle cx="1275.1" cy="733.9" r="9.5" fill="#ffff00"/>
<circle cx="1290.0" cy="736.2" r="9.5" fill="#ffff00"/>
<circle cx="421.9" cy="736.5" r="9.5" fill="#ffff00"/>
<circle cx="459.4" cy="736.5" r="9.5" fill="#990099"/>
<circle cx="1395.4" cy="738.8" r="9.5" fill="#cccccc"/>
<circle cx="518.0" cy="740.3" r="9.5" fill="#990099"/>
<circle cx="1260.4" cy="744.1" r="9.5" fill="#ffff00"/>
<circle cx="539.8" cy="745.9" r="9.5" fill="#ffff00"/>
<circle cx="436.7" cy="746.5" r="9.5" fill="#ffff00"/>
<circle cx="679.2" cy="746.7" r="9.5" fill="#ffff00"/>
<circle cx="1259.1" cy="748.0" r="9.5" fill="#ffff00"/>
<circle cx="1343.4" cy="748.6" r="9.5" fill="#990099"/>
<circle cx="515.0" cy="749.4" r="9.5" fill="#ffff00"/>
<circle cx="542.9" cy="749.4" r="9.5" fill="#ffff00"/>
<circle cx="536.8" cy="750.4" r="9.5" fill="#ffff00"/>
<circle cx="352.6" cy="752.2" r="9.5" fill="#990099"/>
<circle cx="409.9" cy="752.2" r="9.5" fill="#990099"/>
<circle cx="907.4" cy="752.2" r="9.5" fill="#ffff00"/>
<circle cx="592.3" cy="752.2" r="9.5" fill="#ffff00"/>
<circle cx="547.0" cy="752.5" r="9.5" fill="#ffff00"/>
<circle cx="520.6" cy="752.5" r="9.5" fill="#990099"/>
<circle cx="544.9" cy="753.5" r="9.5" fill="#ffff00"/>
<circle cx="1263.6" cy="754.4" r="9.5" fill="#990099"/>
<circle cx="459.4" cy="754.7" r="9.5" fill="#ffff00"/>
<circle cx="1262.3" cy="756.9" r="9.5" fill="#990099"/>
<circle cx="1282.1" cy="756.9" r="9.5" fill="#ffff00"/>
<circle cx="1361.0" cy="757.2" r="9.5" fill="#990099"/>
<circle cx="648.6" cy="757.5" r="9.5" fill="#ffff00"/>
<circle cx="531.2" cy="757.5" r="9.5" fill="#ffff00"/>
<circle cx="447.9" cy="758.5" r="9.5" fill="#ffff00"/>
<circle cx="372.6" cy="758.5" r="9.5" fill="#990099"/>
<circle cx="540.9" cy="758.5" r="9.5" fill="#ffff00"/>
<circle cx="549.0" cy="760.6" r="9.5" fill="#ffff00"/>
<circle cx="440.7" cy="762.2" r="9.5" fill="#990099"/>
<circle cx="1298.1" cy="762.7" r="9.5" fill="#ffff00"/>
<circle cx="551.0" cy="764.6" r="9.5" fill="#ffff00"/>
<circle cx="1259.1" cy="764.6" r="9.5" fill="#990099"/>
<circle cx="1272.6" cy="767.1" r="9.5" fill="#ffff00"/>
<circle cx="399.4" cy="768.0" r="9.5" fill="#990099"/>
<circle cx="350.1" cy="768.0" r="9.5" fill="#990099"/>
<circle cx="668.7" cy="768.2" r="9.5" fill="#ffff00"/>
<circle cx="584.6" cy="768.2" r="9.5" fill="#ffff00"/>
<circle cx="535.8" cy="768.2" r="9.5" fill="#ffff00"/>
<circle cx="1275.1" cy="771.0" r="9.5" fill="#ffff00"/>
<circle cx="520.6" cy="771.7" r="9.5" fill="#990099"/>
<circle cx="1317.0" cy="772.2" r="9.5" fill="#990099"/>
<circle cx="448.4" cy="772.3" r="9.5" fill="#ffff00"/>
<circle cx="498.0" cy="772.3" r="9.5" fill="#ffff00"/>
<circle cx="333.8" cy="772.3" r="9.5" fill="#990099"/>
<circle cx="777.8" cy="772.3" r="9.5" fill="#ffff00"/>
<circle cx="614.9" cy="772.3" r="9.5" fill="#ffff00"/>
<circle cx="629.9" cy="774.3" r="9.5" fill="#990099"/>
<circle cx="530.2" cy="774.8" r="9.5" fill="#ffff00"/>
<circle cx="1265.5" cy="774.8" r="9.5" fill="#990099"/>
<circle cx="545.9" cy="776.8" r="9.5" fill="#ffff00"/>
<circle cx="736.5" cy="777.8" r="9.5" fill="#cccccc"/>
<circle cx="1275.1" cy="778.6" r="9.5" fill="#cccccc"/>
<circle cx="550.0" cy="779.8" r="9.5" fill="#ffff00"/>
<circle cx="556.1" cy="779.8" r="9.5" fill="#ffff00"/>
<circle cx="850.1" cy="780.3" r="9.5" fill="#ffff00"/>
<circle cx="1286.6" cy="781.2" r="9.5" fill="#ffff00"/>
<circle cx="1374.0" cy="782.7" r="9.5" fill="#990099"/>
<circle cx="646.4" cy="782.9" r="9.5" fill="#ffff00"/>
<circle cx="895.4" cy="783.0" r="9.5" fill="#ffff00"/>
<circle cx="562.2" cy="783.4" r="9.5" fill="#ffff00"/>
<circle cx="382.9" cy="783.5" r="9.5" fill="#990099"/>
<circle cx="1310.9" cy="783.7" r="9.5" fill="#ffff00"/>
<circle cx="637.2" cy="784.9" r="9.5" fill="#ffff00"/>
<circle cx="1271.0" cy="785.6" r="9.5" fill="#cccccc"/>
<circle cx="652.4" cy="785.9" r="9.5" fill="#ffff00"/>
<circle cx="531.7" cy="785.9" r="9.5" fill="#990099"/>
<circle cx="1266.8" cy="786.0" r="9.5" fill="#ffff00"/>
<circle cx="1278.3" cy="786.3" r="9.5" fill="#ffff00"/>
<circle cx="1321.1" cy="786.3" r="9.5" fill="#990099"/>
<circle cx="1413.0" cy="786.3" r="9.5" fill="#ffff00"/>
<circle cx="751.3" cy="786.8" r="9.5" fill="#ffff00"/>
<circle cx="553.0" cy="787.0" r="9.5" fill="#ffff00"/>
<circle cx="527.7" cy="787.0" r="9.5" fill="#990099"/>
<circle cx="1400.9" cy="788.2" r="9.5" fill="#990099"/>
<circle cx="536.8" cy="788.5" r="9.5" fill="#990099"/>
<circle cx="1298.1" cy="788.8" r="9.5" fill="#990099"/>
<circle cx="647.4" cy="789.4" r="9.5" fill="#ffff00"/>
<circle cx="1425.1" cy="789.5" r="9.5" fill="#990099"/>
<circle cx="634.2" cy="790.0" r="9.5" fill="#ffff00"/>
<circle cx="657.5" cy="790.0" r="9.5" fill="#ffff00"/>
<circle cx="1317.2" cy="790.1" r="9.5" fill="#990099"/>
<circle cx="1293.0" cy="791.4" r="9.5" fill="#cccccc"/>
<circle cx="1322.1" cy="792.0" r="9.5" fill="#cccccc"/>
<circle cx="391.4" cy="792.3" r="9.5" fill="#990099"/>
<circle cx="1407.9" cy="792.7" r="9.5" fill="#990099"/>
<circle cx="350.1" cy="793.0" r="9.5" fill="#990099"/>
<circle cx="554.1" cy="793.0" r="9.5" fill="#990099"/>
<circle cx="638.2" cy="794.1" r="9.5" fill="#ffff00"/>
<circle cx="652.4" cy="795.1" r="9.5" fill="#ffff00"/>
<circle cx="661.6" cy="795.1" r="9.5" fill="#990099"/>
<circle cx="341.6" cy="796.0" r="9.5" fill="#990099"/>
<circle cx="508.9" cy="796.1" r="9.5" fill="#990099"/>
<circle cx="782.0" cy="796.5" r="9.5" fill="#ffff00"/>
<circle cx="1286.6" cy="797.8" r="9.5" fill="#990099"/>
<circle cx="1344.7" cy="798.8" r="9.5" fill="#ffff00"/>
<circle cx="1361.0" cy="799.0" r="9.5" fill="#990099"/>
<circle cx="1299.4" cy="799.0" r="9.5" fill="#990099"/>
<circle cx="345.8" cy="799.8" r="9.5" fill="#990099"/>
<circle cx="619.1" cy="800.0" r="9.5" fill="#ffff00"/>
<circle cx="531.2" cy="800.1" r="9.5" fill="#990099"/>
<circle cx="658.5" cy="800.1" r="9.5" fill="#990099"/>
<circle cx="1411.7" cy="800.3" r="9.5" fill="#990099"/>
<circle cx="728.5" cy="800.9" r="9.5" fill="#990099"/>
<circle cx="674.3" cy="802.1" r="9.5" fill="#990099"/>
<circle cx="359.1" cy="802.8" r="9.5" fill="#990099"/>
<circle cx="1395.1" cy="802.9" r="9.5" fill="#ffffff"/>
<circle cx="1383.6" cy="802.9" r="9.5" fill="#990099"/>
<circle cx="753.4" cy="803.4" r="9.5" fill="#990099"/>
<circle cx="498.0" cy="803.5" r="9.5" fill="#ffff00"/>
<circle cx="1305.1" cy="803.5" r="9.5" fill="#ffff00"/>
<circle cx="736.2" cy="804.0" r="9.5" fill="#990099"/>
<circle cx="1287.9" cy="804.1" r="9.5" fill="#ffffff"/>
<circle cx="661.5" cy="804.7" r="9.5" fill="#ffff00"/>
<circle cx="569.8" cy="805.2" r="9.5" fill="#990099"/>
<circle cx="751.5" cy="805.3" r="9.5" fill="#990099"/>
<circle cx="497.5" cy="807.3" r="9.5" fill="#990099"/>
<circle cx="772.5" cy="808.0" r="9.5" fill="#ffff00"/>
<circle cx="669.1" cy="808.5" r="9.5" fill="#ffff00"/>
<circle cx="644.4" cy="809.3" r="9.5" fill="#ffff00"/>
<circle cx="1291.7" cy="809.3" r="9.5" fill="#990099"/>
<circle cx="1303.8" cy="809.3" r="9.5" fill="#ffff00"/>
<circle cx="674.3" cy="811.1" r="9.5" fill="#ffff00"/>
<circle cx="729.1" cy="811.1" r="9.5" fill="#ffff00"/>
<circle cx="710.6" cy="811.1" r="9.5" fill="#990099"/>
<circle cx="662.6" cy="811.3" r="9.5" fill="#ffff00"/>
<circle cx="1393.8" cy="811.8" r="9.5" fill="#990099"/>
<circle cx="703.6" cy="812.3" r="9.5" fill="#cccccc"/>
<circle cx="1363.8" cy="813.1" r="9.5" fill="#990099"/>
<circle cx="1384.9" cy="813.1" r="9.5" fill="#990099"/>
<circle cx="481.0" cy="813.3" r="9.5" fill="#990099"/>
<circle cx="679.4" cy="813.6" r="9.5" fill="#ffff00"/>
<circle cx="544.9" cy="815.9" r="9.5" fill="#990099"/>
<circle cx="1308.9" cy="816.0" r="9.5" fill="#ffff00"/>
<circle cx="738.1" cy="816.2" r="9.5" fill="#cccccc"/>
<circle cx="462.2" cy="817.3" r="9.5" fill="#990099"/>
<circle cx="722.0" cy="818.2" r="9.5" fill="#990099"/>
<circle cx="714.3" cy="818.3" r="9.5" fill="#990099"/>
<circle cx="1298.3" cy="819.1" r="9.5" fill="#ffffff"/>
<circle cx="619.1" cy="819.8" r="9.5" fill="#ffff00"/>
<circle cx="679.4" cy="820.0" r="9.5" fill="#ffff00"/>
<circle cx="687.0" cy="820.0" r="9.5" fill="#ffff00"/>
<circle cx="676.8" cy="820.6" r="9.5" fill="#cccccc"/>
<circle cx="717.5" cy="821.3" r="9.5" fill="#990099"/>
<circle cx="710.3" cy="821.4" r="9.5" fill="#990099"/>
<circle cx="1321.7" cy="821.7" r="9.5" fill="#ffff00"/>
<circle cx="731.5" cy="821.7" r="9.5" fill="#990099"/>
<circle cx="683.2" cy="823.8" r="9.5" fill="#ffff00"/>
<circle cx="746.4" cy="823.8" r="9.5" fill="#ffff00"/>
<circle cx="757.1" cy="824.0" r="9.5" fill="#990099"/>
<circle cx="1311.5" cy="824.9" r="9.5" fill="#ffff00"/>
<circle cx="722.5" cy="824.9" r="9.5" fill="#990099"/>
<circle cx="763.5" cy="825.2" r="9.5" fill="#990099"/>
<circle cx="773.8" cy="825.3" r="9.5" fill="#990099"/>
<circle cx="690.9" cy="826.4" r="9.5" fill="#ffff00"/>
<circle cx="771.2" cy="827.7" r="9.5" fill="#990099"/>
<circle cx="711.2" cy="827.9" r="9.5" fill="#990099"/>
<circle cx="761.9" cy="827.9" r="9.5" fill="#990099"/>
<circle cx="681.9" cy="828.9" r="9.5" fill="#ffff00"/>
<circle cx="736.1" cy="829.1" r="9.5" fill="#990099"/>
<circle cx="1324.9" cy="829.4" r="9.5" fill="#cccccc"/>
<circle cx="735.5" cy="830.2" r="9.5" fill="#cccccc"/>
<circle cx="719.9" cy="830.5" r="9.5" fill="#990099"/>
<circle cx="550.0" cy="830.6" r="9.5" fill="#990099"/>
<circle cx="486.1" cy="830.6" r="9.5" fill="#990099"/>
<circle cx="726.5" cy="830.9" r="9.5" fill="#990099"/>
<circle cx="782.6" cy="831.4" r="9.5" fill="#990099"/>
<circle cx="692.1" cy="831.5" r="9.5" fill="#ffff00"/>
<circle cx="778.1" cy="831.7" r="9.5" fill="#990099"/>
<circle cx="657.0" cy="834.6" r="9.5" fill="#ffff00"/>
<circle cx="714.5" cy="834.8" r="9.5" fill="#990099"/>
<circle cx="694.7" cy="835.3" r="9.5" fill="#ffff00"/>
<circle cx="726.6" cy="835.3" r="9.5" fill="#cccccc"/>
<circle cx="619.5" cy="835.6" r="9.5" fill="#ffff00"/>
<circle cx="523.6" cy="835.6" r="9.5" fill="#990099"/>
<circle cx="748.1" cy="836.3" r="9.5" fill="#990099"/>
<circle cx="824.5" cy="837.0" r="9.5" fill="#cccccc"/>
<circle cx="754.7" cy="837.9" r="9.5" fill="#cccccc"/>
<circle cx="763.0" cy="838.1" r="9.5" fill="#990099"/>
<circle cx="731.4" cy="838.2" r="9.5" fill="#990099"/>
<circle cx="757.0" cy="838.3" r="9.5" fill="#990099"/>
<circle cx="774.3" cy="838.7" r="9.5" fill="#990099"/>
<circle cx="723.4" cy="839.1" r="9.5" fill="#990099"/>
<circle cx="743.0" cy="839.1" r="9.5" fill="#990099"/>
<circle cx="825.1" cy="839.3" r="9.5" fill="#cccccc"/>
<circle cx="638.2" cy="840.7" r="9.5" fill="#ffff00"/>
<circle cx="826.6" cy="841.1" r="9.5" fill="#ffff00"/>
<circle cx="490.1" cy="841.7" r="9.5" fill="#990099"/>
<circle cx="685.7" cy="841.7" r="9.5" fill="#ffff00"/>
<circle cx="759.3" cy="841.7" r="9.5" fill="#990099"/>
<circle cx="742.9" cy="842.2" r="9.5" fill="#990099"/>
<circle cx="736.0" cy="842.3" r="9.5" fill="#990099"/>
<circle cx="729.1" cy="843.0" r="9.5" fill="#990099"/>
<circle cx="1333.8" cy="844.0" r="9.5" fill="#990099"/>
<circle cx="690.9" cy="844.3" r="9.5" fill="#ffff00"/>
<circle cx="793.0" cy="844.3" r="9.5" fill="#ffff00"/>
<circle cx="662.1" cy="844.9" r="9.5" fill="#ffff00"/>
<circle cx="823.4" cy="845.3" r="9.5" fill="#990099"/>
<circle cx="720.1" cy="845.9" r="9.5" fill="#990099"/>
<circle cx="753.8" cy="846.3" r="9.5" fill="#990099"/>
<circle cx="1331.9" cy="847.2" r="9.5" fill="#990099"/>
<circle cx="1352.3" cy="847.2" r="9.5" fill="#990099"/>
<circle cx="1356.2" cy="847.2" r="9.5" fill="#ffff00"/>
<circle cx="693.4" cy="848.1" r="9.5" fill="#ffff00"/>
<circle cx="734.5" cy="849.0" r="9.5" fill="#990099"/>
<circle cx="755.0" cy="850.5" r="9.5" fill="#990099"/>
<circle cx="1363.8" cy="851.1" r="9.5" fill="#cccccc"/>
<circle cx="714.3" cy="851.3" r="9.5" fill="#990099"/>
<circle cx="694.0" cy="851.9" r="9.5" fill="#ffff00"/>
<circle cx="661.5" cy="851.9" r="9.5" fill="#ffff00"/>
<circle cx="749.5" cy="852.2" r="9.5" fill="#990099"/>
<circle cx="766.6" cy="852.6" r="9.5" fill="#990099"/>
<circle cx="742.0" cy="853.0" r="9.5" fill="#990099"/>
<circle cx="1351.1" cy="854.9" r="9.5" fill="#ffff00"/>
<circle cx="723.2" cy="855.1" r="9.5" fill="#990099"/>
<circle cx="356.7" cy="856.0" r="9.5" fill="#990099"/>
<circle cx="1344.7" cy="856.2" r="9.5" fill="#990099"/>
<circle cx="1361.3" cy="856.2" r="9.5" fill="#990099"/>
<circle cx="752.9" cy="857.0" r="9.5" fill="#990099"/>
<circle cx="1140.9" cy="857.5" r="9.5" fill="#990099"/>
<circle cx="746.2" cy="857.7" r="9.5" fill="#990099"/>
<circle cx="685.1" cy="858.3" r="9.5" fill="#ffff00"/>
<circle cx="747.1" cy="858.3" r="9.5" fill="#990099"/>
<circle cx="1365.1" cy="858.7" r="9.5" fill="#990099"/>
<circle cx="652.6" cy="859.6" r="9.5" fill="#ffff00"/>
<circle cx="681.9" cy="859.6" r="9.5" fill="#ffff00"/>
<circle cx="779.4" cy="859.6" r="9.5" fill="#990099"/>
<circle cx="736.3" cy="860.1" r="9.5" fill="#990099"/>
<circle cx="671.7" cy="860.9" r="9.5" fill="#ffff00"/>
<circle cx="678.1" cy="860.9" r="9.5" fill="#ffff00"/>
<circle cx="1379.8" cy="861.3" r="9.5" fill="#ffff00"/>
<circle cx="755.1" cy="861.5" r="9.5" fill="#990099"/>
<circle cx="1338.9" cy="861.9" r="9.5" fill="#990099"/>
<circle cx="732.1" cy="862.8" r="9.5" fill="#990099"/>
<circle cx="828.5" cy="862.8" r="9.5" fill="#ffff00"/>
<circle cx="480.7" cy="863.3" r="9.5" fill="#990099"/>
<circle cx="500.3" cy="864.1" r="9.5" fill="#cccccc"/>
<circle cx="674.3" cy="864.7" r="9.5" fill="#ffff00"/>
<circle cx="754.5" cy="864.9" r="9.5" fill="#990099"/>
<circle cx="1381.7" cy="865.1" r="9.5" fill="#ffff00"/>
<circle cx="749.6" cy="865.1" r="9.5" fill="#990099"/>
<circle cx="825.3" cy="865.3" r="9.5" fill="#ffff00"/>
<circle cx="656.4" cy="866.0" r="9.5" fill="#ffff00"/>
<circle cx="739.9" cy="866.8" r="9.5" fill="#990099"/>
<circle cx="1353.0" cy="867.7" r="9.5" fill="#990099"/>
<circle cx="1385.5" cy="867.7" r="9.5" fill="#ffff00"/>
<circle cx="822.8" cy="867.9" r="9.5" fill="#ffff00"/>
<circle cx="559.8" cy="868.4" r="9.5" fill="#990099"/>
<circle cx="511.3" cy="869.2" r="9.5" fill="#ffff00"/>
<circle cx="1356.2" cy="870.2" r="9.5" fill="#990099"/>
<circle cx="355.7" cy="871.0" r="9.5" fill="#990099"/>
<circle cx="818.9" cy="871.1" r="9.5" fill="#cccccc"/>
<circle cx="747.4" cy="871.7" r="9.5" fill="#990099"/>
<circle cx="771.7" cy="871.7" r="9.5" fill="#990099"/>
<circle cx="745.0" cy="871.7" r="9.5" fill="#990099"/>
<circle cx="1366.4" cy="872.1" r="9.5" fill="#ffff00"/>
<circle cx="664.7" cy="872.3" r="9.5" fill="#ffff00"/>
<circle cx="422.1" cy="872.6" r="9.5" fill="#990099"/>
<circle cx="451.0" cy="872.6" r="9.5" fill="#990099"/>
<circle cx="769.8" cy="872.6" r="9.5" fill="#990099"/>
<circle cx="1397.7" cy="873.4" r="9.5" fill="#990099"/>
<circle cx="448.9" cy="873.9" r="9.5" fill="#990099"/>
<circle cx="505.4" cy="874.3" r="9.5" fill="#990099"/>
<circle cx="741.1" cy="874.3" r="9.5" fill="#990099"/>
<circle cx="359.3" cy="874.3" r="9.5" fill="#990099"/>
<circle cx="516.4" cy="875.2" r="9.5" fill="#ffff00"/>
<circle cx="301.4" cy="875.2" r="9.5" fill="#990099"/>
<circle cx="1378.5" cy="875.3" r="9.5" fill="#cccccc"/>
<circle cx="351.3" cy="875.3" r="9.5" fill="#990099"/>
<circle cx="773.6" cy="875.5" r="9.5" fill="#990099"/>
<circle cx="822.8" cy="875.5" r="9.5" fill="#cccccc"/>
<circle cx="455.3" cy="875.5" r="9.5" fill="#990099"/>
<circle cx="424.7" cy="875.7" r="9.5" fill="#990099"/>
<circle cx="505.5" cy="876.0" r="9.5" fill="#990099"/>
<circle cx="300.5" cy="876.6" r="9.5" fill="#990099"/>
<circle cx="770.8" cy="876.8" r="9.5" fill="#990099"/>
<circle cx="363.5" cy="877.0" r="9.5" fill="#990099"/>
<circle cx="1384.3" cy="877.2" r="9.5" fill="#ffff00"/>
<circle cx="497.7" cy="878.6" r="9.5" fill="#cccccc"/>
<circle cx="653.8" cy="878.7" r="9.5" fill="#ffff00"/>
<circle cx="747.5" cy="879.4" r="9.5" fill="#990099"/>
<circle cx="324.4" cy="879.6" r="9.5" fill="#990099"/>
<circle cx="361.0" cy="879.7" r="9.5" fill="#990099"/>
<circle cx="1390.0" cy="879.8" r="9.5" fill="#ffff00"/>
<circle cx="1413.0" cy="879.8" r="9.5" fill="#990099"/>
<circle cx="427.7" cy="879.8" r="9.5" fill="#990099"/>
<circle cx="344.2" cy="879.9" r="9.5" fill="#990099"/>
<circle cx="368.6" cy="880.0" r="9.5" fill="#990099"/>
<circle cx="303.7" cy="880.1" r="9.5" fill="#990099"/>
<circle cx="453.3" cy="880.1" r="9.5" fill="#990099"/>
<circle cx="312.0" cy="880.2" r="9.5" fill="#990099"/>
<circle cx="329.4" cy="880.5" r="9.5" fill="#990099"/>
<circle cx="419.3" cy="880.8" r="9.5" fill="#990099"/>
<circle cx="316.0" cy="880.9" r="9.5" fill="#990099"/>
<circle cx="357.1" cy="881.0" r="9.5" fill="#990099"/>
<circle cx="914.3" cy="881.5" r="9.5" fill="#ffff00"/>
<circle cx="348.6" cy="881.7" r="9.5" fill="#990099"/>
<circle cx="507.1" cy="882.0" r="9.5" fill="#ffff00"/>
<circle cx="298.0" cy="882.0" r="9.5" fill="#990099"/>
<circle cx="298.3" cy="882.1" r="9.5" fill="#990099"/>
<circle cx="376.0" cy="882.5" r="9.5" fill="#990099"/>
<circle cx="459.0" cy="882.5" r="9.5" fill="#990099"/>
<circle cx="833.0" cy="882.6" r="9.5" fill="#cccccc"/>
<circle cx="392.4" cy="882.8" r="9.5" fill="#ffff00"/>
<circle cx="445.0" cy="882.9" r="9.5" fill="#990099"/>
<circle cx="440.3" cy="883.0" r="9.5" fill="#990099"/>
<circle cx="769.4" cy="883.5" r="9.5" fill="#990099"/>
<circle cx="650.0" cy="883.8" r="9.5" fill="#ffff00"/>
<circle cx="740.4" cy="883.8" r="9.5" fill="#990099"/>
<circle cx="751.3" cy="883.8" r="9.5" fill="#990099"/>
<circle cx="360.1" cy="884.8" r="9.5" fill="#990099"/>
<circle cx="332.7" cy="885.5" r="9.5" fill="#990099"/>
<circle cx="459.6" cy="885.5" r="9.5" fill="#990099"/>
<circle cx="369.9" cy="885.8" r="9.5" fill="#990099"/>
<circle cx="422.1" cy="886.0" r="9.5" fill="#990099"/>
<circle cx="440.9" cy="886.0" r="9.5" fill="#990099"/>
<circle cx="314.5" cy="886.1" r="9.5" fill="#990099"/>
<circle cx="523.2" cy="886.2" r="9.5" fill="#ffff00"/>
<circle cx="436.0" cy="886.2" r="9.5" fill="#990099"/>
<circle cx="455.7" cy="886.2" r="9.5" fill="#990099"/>
<circle cx="414.9" cy="886.7" r="9.5" fill="#990099"/>
<circle cx="377.2" cy="886.8" r="9.5" fill="#990099"/>
<circle cx="447.0" cy="886.9" r="9.5" fill="#990099"/>
<circle cx="762.8" cy="887.0" r="9.5" fill="#990099"/>
<circle cx="409.4" cy="887.1" r="9.5" fill="#cccccc"/>
<circle cx="467.2" cy="887.1" r="9.5" fill="#990099"/>
<circle cx="428.7" cy="887.3" r="9.5" fill="#990099"/>
<circle cx="499.3" cy="887.4" r="9.5" fill="#990099"/>
<circle cx="716.4" cy="887.7" r="9.5" fill="#990099"/>
<circle cx="326.8" cy="887.8" r="9.5" fill="#990099"/>
<circle cx="344.8" cy="887.8" r="9.5" fill="#990099"/>
<circle cx="339.8" cy="887.9" r="9.5" fill="#990099"/>
<circle cx="354.1" cy="887.9" r="9.5" fill="#990099"/>
<circle cx="1412.3" cy="888.1" r="9.5" fill="#990099"/>
<circle cx="1457.0" cy="888.1" r="9.5" fill="#990099"/>
<circle cx="319.5" cy="888.1" r="9.5" fill="#990099"/>
<circle cx="365.7" cy="888.1" r="9.5" fill="#990099"/>
<circle cx="411.9" cy="888.1" r="9.5" fill="#990099"/>
<circle cx="766.6" cy="888.3" r="9.5" fill="#990099"/>
<circle cx="307.3" cy="888.4" r="9.5" fill="#990099"/>
<circle cx="480.7" cy="888.8" r="9.5" fill="#cccccc"/>
<circle cx="771.7" cy="889.6" r="9.5" fill="#990099"/>
<circle cx="776.8" cy="889.6" r="9.5" fill="#990099"/>
<circle cx="511.3" cy="890.5" r="9.5" fill="#ffff00"/>
<circle cx="363.1" cy="890.5" r="9.5" fill="#990099"/>
<circle cx="408.0" cy="890.5" r="9.5" fill="#990099"/>
<circle cx="366.9" cy="890.7" r="9.5" fill="#990099"/>
<circle cx="420.5" cy="890.7" r="9.5" fill="#990099"/>
<circle cx="773.4" cy="890.7" r="9.5" fill="#990099"/>
<circle cx="353.7" cy="890.9" r="9.5" fill="#990099"/>
<circle cx="491.0" cy="890.9" r="9.5" fill="#990099"/>
<circle cx="376.3" cy="891.0" r="9.5" fill="#990099"/>
<circle cx="444.3" cy="891.0" r="9.5" fill="#990099"/>
<circle cx="662.8" cy="891.5" r="9.5" fill="#ffff00"/>
<circle cx="430.8" cy="891.6" r="9.5" fill="#990099"/>
<circle cx="459.0" cy="891.8" r="9.5" fill="#990099"/>
<circle cx="463.9" cy="891.8" r="9.5" fill="#990099"/>
<circle cx="1450.0" cy="891.9" r="9.5" fill="#990099"/>
<circle cx="1469.1" cy="891.9" r="9.5" fill="#990099"/>
<circle cx="470.3" cy="891.9" r="9.5" fill="#990099"/>
<circle cx="485.5" cy="891.9" r="9.5" fill="#990099"/>
<circle cx="316.3" cy="892.1" r="9.5" fill="#990099"/>
<circle cx="475.6" cy="892.2" r="9.5" fill="#990099"/>
<circle cx="414.3" cy="892.3" r="9.5" fill="#990099"/>
<circle cx="343.7" cy="892.5" r="9.5" fill="#990099"/>
<circle cx="402.2" cy="892.5" r="9.5" fill="#990099"/>
<circle cx="347.7" cy="892.6" r="9.5" fill="#990099"/>
<circle cx="450.7" cy="892.7" r="9.5" fill="#990099"/>
<circle cx="337.6" cy="892.9" r="9.5" fill="#990099"/>
<circle cx="497.2" cy="893.2" r="9.5" fill="#990099"/>
<circle cx="769.1" cy="893.4" r="9.5" fill="#990099"/>
<circle cx="312.4" cy="893.4" r="9.5" fill="#990099"/>
<circle cx="322.2" cy="893.4" r="9.5" fill="#990099"/>
<circle cx="394.7" cy="893.5" r="9.5" fill="#990099"/>
<circle cx="439.1" cy="893.5" r="9.5" fill="#990099"/>
<circle cx="379.4" cy="893.6" r="9.5" fill="#990099"/>
<circle cx="386.2" cy="893.6" r="9.5" fill="#990099"/>
<circle cx="330.7" cy="893.7" r="9.5" fill="#990099"/>
<circle cx="427.0" cy="893.9" r="9.5" fill="#990099"/>
<circle cx="655.1" cy="894.0" r="9.5" fill="#ffff00"/>
<circle cx="830.4" cy="894.0" r="9.5" fill="#cccccc"/>
<circle cx="718.9" cy="895.3" r="9.5" fill="#ffff00"/>
<circle cx="1414.9" cy="895.7" r="9.5" fill="#990099"/>
<circle cx="894.3" cy="896.0" r="9.5" fill="#990099"/>
<circle cx="357.8" cy="896.0" r="9.5" fill="#990099"/>
<circle cx="487.7" cy="896.2" r="9.5" fill="#990099"/>
<circle cx="841.3" cy="896.6" r="9.5" fill="#cccccc"/>
<circle cx="429.1" cy="896.7" r="9.5" fill="#990099"/>
<circle cx="326.1" cy="896.8" r="9.5" fill="#990099"/>
<circle cx="312.8" cy="896.9" r="9.5" fill="#990099"/>
<circle cx="352.8" cy="896.9" r="9.5" fill="#990099"/>
<circle cx="889.1" cy="897.2" r="9.5" fill="#990099"/>
<circle cx="456.9" cy="897.3" r="9.5" fill="#ffff00"/>
<circle cx="507.9" cy="897.3" r="9.5" fill="#ffff00"/>
<circle cx="524.1" cy="897.3" r="9.5" fill="#990099"/>
<circle cx="1496.6" cy="897.3" r="9.5" fill="#990099"/>
<circle cx="365.2" cy="897.3" r="9.5" fill="#990099"/>
<circle cx="370.4" cy="897.3" r="9.5" fill="#990099"/>
<circle cx="417.8" cy="897.4" r="9.5" fill="#990099"/>
<circle cx="479.7" cy="897.5" r="9.5" fill="#990099"/>
<circle cx="518.6" cy="897.7" r="9.5" fill="#990099"/>
<circle cx="404.9" cy="898.0" r="9.5" fill="#990099"/>
<circle cx="319.3" cy="898.1" r="9.5" fill="#990099"/>
<circle cx="390.8" cy="898.2" r="9.5" fill="#990099"/>
<circle cx="1411.7" cy="898.3" r="9.5" fill="#990099"/>
<circle cx="338.9" cy="898.6" r="9.5" fill="#990099"/>
<circle cx="410.0" cy="898.6" r="9.5" fill="#990099"/>
<circle cx="434.6" cy="898.6" r="9.5" fill="#990099"/>
<circle cx="377.4" cy="898.8" r="9.5" fill="#990099"/>
<circle cx="1462.1" cy="898.9" r="9.5" fill="#cccccc"/>
<circle cx="499.4" cy="899.0" r="9.5" fill="#ffff00"/>
<circle cx="397.5" cy="899.0" r="9.5" fill="#cccccc"/>
<circle cx="718.9" cy="899.1" r="9.5" fill="#990099"/>
<circle cx="345.7" cy="899.1" r="9.5" fill="#990099"/>
<circle cx="397.1" cy="899.1" r="9.5" fill="#990099"/>
<circle cx="473.1" cy="899.2" r="9.5" fill="#990099"/>
<circle cx="469.0" cy="899.3" r="9.5" fill="#990099"/>
<circle cx="334.0" cy="899.5" r="9.5" fill="#990099"/>
<circle cx="442.7" cy="899.5" r="9.5" fill="#990099"/>
<circle cx="423.7" cy="899.6" r="9.5" fill="#990099"/>
<circle cx="383.1" cy="899.7" r="9.5" fill="#990099"/>
<circle cx="473.9" cy="899.8" r="9.5" fill="#cccccc"/>
<circle cx="1419.4" cy="900.2" r="9.5" fill="#990099"/>
<circle cx="478.7" cy="901.6" r="9.5" fill="#990099"/>
<circle cx="331.6" cy="901.8" r="9.5" fill="#990099"/>
<circle cx="375.0" cy="901.8" r="9.5" fill="#990099"/>
<circle cx="413.8" cy="901.9" r="9.5" fill="#990099"/>
<circle cx="421.3" cy="902.0" r="9.5" fill="#990099"/>
<circle cx="394.3" cy="902.1" r="9.5" fill="#990099"/>
<circle cx="444.5" cy="902.1" r="9.5" fill="#990099"/>
<circle cx="462.0" cy="902.4" r="9.5" fill="#ffff00"/>
<circle cx="514.7" cy="902.4" r="9.5" fill="#ffff00"/>
<circle cx="483.7" cy="902.4" r="9.5" fill="#990099"/>
<circle cx="338.1" cy="902.8" r="9.5" fill="#990099"/>
<circle cx="381.2" cy="902.8" r="9.5" fill="#990099"/>
<circle cx="491.1" cy="902.8" r="9.5" fill="#990099"/>
<circle cx="720.2" cy="903.0" r="9.5" fill="#ffff00"/>
<circle cx="738.1" cy="903.0" r="9.5" fill="#990099"/>
<circle cx="838.7" cy="903.6" r="9.5" fill="#ffff00"/>
<circle cx="401.0" cy="903.8" r="9.5" fill="#990099"/>
<circle cx="348.5" cy="904.0" r="9.5" fill="#990099"/>
<circle cx="370.2" cy="904.0" r="9.5" fill="#990099"/>
<circle cx="388.5" cy="904.0" r="9.5" fill="#990099"/>
<circle cx="343.9" cy="904.3" r="9.5" fill="#990099"/>
<circle cx="361.1" cy="904.3" r="9.5" fill="#990099"/>
<circle cx="356.2" cy="904.5" r="9.5" fill="#990099"/>
<circle cx="322.2" cy="904.8" r="9.5" fill="#990099"/>
<circle cx="405.6" cy="904.8" r="9.5" fill="#990099"/>
<circle cx="910.2" cy="905.5" r="9.5" fill="#990099"/>
<circle cx="931.5" cy="905.5" r="9.5" fill="#990099"/>
<circle cx="875.7" cy="905.5" r="9.5" fill="#ffff00"/>
<circle cx="430.6" cy="905.8" r="9.5" fill="#ffff00"/>
<circle cx="443.4" cy="905.8" r="9.5" fill="#ffff00"/>
<circle cx="670.4" cy="906.2" r="9.5" fill="#ffff00"/>
<circle cx="964.0" cy="906.8" r="9.5" fill="#990099"/>
<circle cx="353.5" cy="907.1" r="9.5" fill="#990099"/>
<circle cx="516.4" cy="907.5" r="9.5" fill="#ffff00"/>
<circle cx="327.2" cy="907.5" r="9.5" fill="#990099"/>
<circle cx="487.6" cy="907.5" r="9.5" fill="#990099"/>
<circle cx="332.9" cy="907.7" r="9.5" fill="#990099"/>
<circle cx="344.9" cy="907.9" r="9.5" fill="#990099"/>
<circle cx="969.8" cy="908.1" r="9.5" fill="#990099"/>
<circle cx="385.2" cy="908.1" r="9.5" fill="#990099"/>
<circle cx="507.0" cy="908.3" r="9.5" fill="#990099"/>
<circle cx="367.0" cy="908.4" r="9.5" fill="#990099"/>
<circle cx="1437.9" cy="908.5" r="9.5" fill="#990099"/>
<circle cx="1464.7" cy="908.5" r="9.5" fill="#990099"/>
<circle cx="804.9" cy="908.7" r="9.5" fill="#990099"/>
<circle cx="416.5" cy="908.7" r="9.5" fill="#990099"/>
<circle cx="392.2" cy="908.8" r="9.5" fill="#990099"/>
<circle cx="410.7" cy="908.8" r="9.5" fill="#990099"/>
<circle cx="421.7" cy="909.0" r="9.5" fill="#990099"/>
<circle cx="339.7" cy="909.1" r="9.5" fill="#990099"/>
<circle cx="371.8" cy="909.2" r="9.5" fill="#990099"/>
<circle cx="494.6" cy="909.3" r="9.5" fill="#990099"/>
<circle cx="837.4" cy="909.4" r="9.5" fill="#990099"/>
<circle cx="397.6" cy="909.7" r="9.5" fill="#990099"/>
<circle cx="501.3" cy="909.7" r="9.5" fill="#990099"/>
<circle cx="401.7" cy="909.9" r="9.5" fill="#990099"/>
<circle cx="479.8" cy="910.3" r="9.5" fill="#990099"/>
<circle cx="360.0" cy="910.4" r="9.5" fill="#990099"/>
<circle cx="474.2" cy="910.5" r="9.5" fill="#990099"/>
<circle cx="378.6" cy="910.7" r="9.5" fill="#990099"/>
<circle cx="451.8" cy="910.9" r="9.5" fill="#ffff00"/>
<circle cx="729.1" cy="911.0" r="9.5" fill="#990099"/>
<circle cx="749.6" cy="911.0" r="9.5" fill="#990099"/>
<circle cx="823.4" cy="911.0" r="9.5" fill="#990099"/>
<circle cx="802.3" cy="911.3" r="9.5" fill="#990099"/>
<circle cx="327.4" cy="911.9" r="9.5" fill="#cccccc"/>
<circle cx="1474.3" cy="912.3" r="9.5" fill="#990099"/>
<circle cx="1484.5" cy="912.3" r="9.5" fill="#990099"/>
<circle cx="1518.3" cy="912.3" r="9.5" fill="#ffff00"/>
<circle cx="387.3" cy="912.6" r="9.5" fill="#ffff00"/>
<circle cx="423.8" cy="912.6" r="9.5" fill="#ffff00"/>
<circle cx="465.4" cy="912.6" r="9.5" fill="#ffff00"/>
<circle cx="643.6" cy="912.6" r="9.5" fill="#ffff00"/>
<circle cx="405.0" cy="912.9" r="9.5" fill="#990099"/>
<circle cx="508.6" cy="912.9" r="9.5" fill="#990099"/>
<circle cx="400.1" cy="913.1" r="9.5" fill="#990099"/>
<circle cx="372.9" cy="913.3" r="9.5" fill="#990099"/>
<circle cx="865.9" cy="913.4" r="9.5" fill="#cccccc"/>
<circle cx="983.6" cy="913.4" r="9.5" fill="#990099"/>
<circle cx="495.5" cy="913.5" r="9.5" fill="#990099"/>
<circle cx="478.1" cy="913.6" r="9.5" fill="#990099"/>
<circle cx="491.7" cy="913.6" r="9.5" fill="#990099"/>
<circle cx="343.8" cy="914.0" r="9.5" fill="#990099"/>
<circle cx="382.2" cy="914.3" r="9.5" fill="#ffff00"/>
<circle cx="390.7" cy="914.3" r="9.5" fill="#ffff00"/>
<circle cx="433.2" cy="914.3" r="9.5" fill="#ffff00"/>
<circle cx="335.4" cy="914.3" r="9.5" fill="#990099"/>
<circle cx="484.7" cy="914.3" r="9.5" fill="#990099"/>
<circle cx="412.0" cy="914.4" r="9.5" fill="#990099"/>
<circle cx="804.9" cy="914.5" r="9.5" fill="#990099"/>
<circle cx="1448.1" cy="914.9" r="9.5" fill="#990099"/>
<circle cx="1471.1" cy="914.9" r="9.5" fill="#990099"/>
<circle cx="504.1" cy="914.9" r="9.5" fill="#990099"/>
<circle cx="1455.7" cy="916.2" r="9.5" fill="#990099"/>
<circle cx="1483.8" cy="916.2" r="9.5" fill="#990099"/>
<circle cx="1523.4" cy="916.2" r="9.5" fill="#ffff00"/>
<circle cx="408.8" cy="917.1" r="9.5" fill="#990099"/>
<circle cx="496.6" cy="917.1" r="9.5" fill="#990099"/>
<circle cx="482.4" cy="917.7" r="9.5" fill="#ffff00"/>
<circle cx="1437.9" cy="918.7" r="9.5" fill="#990099"/>
<circle cx="1502.3" cy="919.4" r="9.5" fill="#990099"/>
<circle cx="1490.9" cy="920.0" r="9.5" fill="#990099"/>
<circle cx="755.7" cy="920.9" r="9.5" fill="#990099"/>
<circle cx="492.2" cy="920.9" r="9.5" fill="#990099"/>
<circle cx="535.5" cy="921.1" r="9.5" fill="#990099"/>
<circle cx="467.9" cy="921.2" r="9.5" fill="#990099"/>
<circle cx="1531.7" cy="921.3" r="9.5" fill="#990099"/>
<circle cx="1536.2" cy="921.3" r="9.5" fill="#990099"/>
<circle cx="1443.0" cy="922.6" r="9.5" fill="#990099"/>
<circle cx="450.3" cy="922.7" r="9.5" fill="#990099"/>
<circle cx="416.2" cy="922.8" r="9.5" fill="#ffff00"/>
<circle cx="730.9" cy="922.8" r="9.5" fill="#990099"/>
<circle cx="455.1" cy="922.8" r="9.5" fill="#990099"/>
<circle cx="1432.1" cy="923.0" r="9.5" fill="#ffff00"/>
<circle cx="502.0" cy="923.0" r="9.5" fill="#990099"/>
<circle cx="405.4" cy="923.3" r="9.5" fill="#990099"/>
<circle cx="425.3" cy="923.3" r="9.5" fill="#990099"/>
<circle cx="741.1" cy="923.4" r="9.5" fill="#990099"/>
<circle cx="439.3" cy="924.0" r="9.5" fill="#990099"/>
<circle cx="507.7" cy="924.2" r="9.5" fill="#990099"/>
<circle cx="475.1" cy="924.3" r="9.5" fill="#990099"/>
<circle cx="1466.0" cy="924.5" r="9.5" fill="#cccccc"/>
<circle cx="433.5" cy="924.5" r="9.5" fill="#990099"/>
<circle cx="790.2" cy="925.3" r="9.5" fill="#990099"/>
<circle cx="1459.6" cy="926.4" r="9.5" fill="#ffff00"/>
<circle cx="428.2" cy="927.3" r="9.5" fill="#990099"/>
<circle cx="470.6" cy="927.3" r="9.5" fill="#990099"/>
<circle cx="1428.9" cy="927.7" r="9.5" fill="#ffff00"/>
<circle cx="1440.4" cy="927.7" r="9.5" fill="#ffff00"/>
<circle cx="1474.9" cy="927.7" r="9.5" fill="#990099"/>
<circle cx="435.5" cy="927.8" r="9.5" fill="#990099"/>
<circle cx="1020.9" cy="928.1" r="9.5" fill="#990099"/>
<circle cx="838.1" cy="928.5" r="9.5" fill="#990099"/>
<circle cx="1435.3" cy="928.9" r="9.5" fill="#ffff00"/>
<circle cx="848.3" cy="929.1" r="9.5" fill="#990099"/>
<circle cx="460.4" cy="929.1" r="9.5" fill="#990099"/>
<circle cx="735.3" cy="929.8" r="9.5" fill="#990099"/>
<circle cx="1425.7" cy="930.2" r="9.5" fill="#cccccc"/>
<circle cx="411.6" cy="930.3" r="9.5" fill="#990099"/>
<circle cx="494.8" cy="930.6" r="9.5" fill="#990099"/>
<circle cx="505.9" cy="930.7" r="9.5" fill="#990099"/>
<circle cx="454.1" cy="931.3" r="9.5" fill="#990099"/>
<circle cx="488.6" cy="931.5" r="9.5" fill="#990099"/>
<circle cx="443.5" cy="931.7" r="9.5" fill="#990099"/>
<circle cx="1439.8" cy="932.1" r="9.5" fill="#cccccc"/>
<circle cx="478.2" cy="932.1" r="9.5" fill="#990099"/>
<circle cx="1462.1" cy="932.8" r="9.5" fill="#ffff00"/>
<circle cx="849.6" cy="933.0" r="9.5" fill="#990099"/>
<circle cx="1525.3" cy="933.4" r="9.5" fill="#990099"/>
<circle cx="767.5" cy="933.6" r="9.5" fill="#990099"/>
<circle cx="1450.6" cy="934.0" r="9.5" fill="#ffff00"/>
<circle cx="998.1" cy="934.9" r="9.5" fill="#990099"/>
<circle cx="933.4" cy="934.9" r="9.5" fill="#ffff00"/>
<circle cx="405.5" cy="935.1" r="9.5" fill="#990099"/>
<circle cx="1476.8" cy="935.3" r="9.5" fill="#990099"/>
<circle cx="425.3" cy="935.4" r="9.5" fill="#990099"/>
<circle cx="489.9" cy="935.6" r="9.5" fill="#990099"/>
<circle cx="497.7" cy="936.2" r="9.5" fill="#990099"/>
<circle cx="1427.7" cy="936.6" r="9.5" fill="#ffff00"/>
<circle cx="747.4" cy="936.8" r="9.5" fill="#990099"/>
<circle cx="413.3" cy="936.9" r="9.5" fill="#990099"/>
<circle cx="1506.2" cy="937.2" r="9.5" fill="#990099"/>
<circle cx="447.5" cy="937.5" r="9.5" fill="#990099"/>
<circle cx="870.6" cy="937.8" r="9.5" fill="#990099"/>
<circle cx="897.7" cy="937.8" r="9.5" fill="#990099"/>
<circle cx="1462.8" cy="937.9" r="9.5" fill="#ffff00"/>
<circle cx="472.7" cy="938.2" r="9.5" fill="#990099"/>
<circle cx="480.5" cy="938.5" r="9.5" fill="#990099"/>
<circle cx="430.0" cy="938.9" r="9.5" fill="#990099"/>
<circle cx="463.6" cy="938.9" r="9.5" fill="#990099"/>
<circle cx="863.6" cy="938.9" r="9.5" fill="#990099"/>
<circle cx="882.8" cy="938.9" r="9.5" fill="#990099"/>
<circle cx="921.0" cy="939.3" r="9.5" fill="#990099"/>
<circle cx="878.5" cy="939.4" r="9.5" fill="#990099"/>
<circle cx="438.0" cy="939.5" r="9.5" fill="#990099"/>
<circle cx="507.9" cy="939.6" r="9.5" fill="#990099"/>
<circle cx="909.5" cy="939.6" r="9.5" fill="#990099"/>
<circle cx="890.4" cy="940.1" r="9.5" fill="#990099"/>
<circle cx="800.8" cy="941.3" r="9.5" fill="#990099"/>
<circle cx="1554.0" cy="942.1" r="9.5" fill="#990099"/>
<circle cx="478.6" cy="942.2" r="9.5" fill="#990099"/>
<circle cx="941.1" cy="942.6" r="9.5" fill="#cccccc"/>
<circle cx="495.3" cy="942.7" r="9.5" fill="#990099"/>
<circle cx="879.3" cy="942.7" r="9.5" fill="#990099"/>
<circle cx="940.8" cy="942.9" r="9.5" fill="#990099"/>
<circle cx="1434.0" cy="943.0" r="9.5" fill="#ffff00"/>
<circle cx="1446.8" cy="943.0" r="9.5" fill="#990099"/>
<circle cx="410.2" cy="943.0" r="9.5" fill="#990099"/>
<circle cx="437.9" cy="943.0" r="9.5" fill="#990099"/>
<circle cx="892.1" cy="943.3" r="9.5" fill="#990099"/>
<circle cx="419.1" cy="943.7" r="9.5" fill="#990099"/>
<circle cx="925.2" cy="943.9" r="9.5" fill="#990099"/>
<circle cx="904.9" cy="944.0" r="9.5" fill="#990099"/>
<circle cx="872.2" cy="944.1" r="9.5" fill="#990099"/>
<circle cx="512.3" cy="944.3" r="9.5" fill="#990099"/>
<circle cx="503.8" cy="944.4" r="9.5" fill="#990099"/>
<circle cx="871.3" cy="945.1" r="9.5" fill="#990099"/>
<circle cx="885.3" cy="945.3" r="9.5" fill="#990099"/>
<circle cx="1453.2" cy="945.5" r="9.5" fill="#990099"/>
<circle cx="426.3" cy="945.6" r="9.5" fill="#990099"/>
<circle cx="854.7" cy="945.7" r="9.5" fill="#990099"/>
<circle cx="486.2" cy="945.7" r="9.5" fill="#990099"/>
<circle cx="899.6" cy="945.7" r="9.5" fill="#990099"/>
<circle cx="913.3" cy="945.7" r="9.5" fill="#990099"/>
<circle cx="920.8" cy="945.7" r="9.5" fill="#990099"/>
<circle cx="932.0" cy="945.7" r="9.5" fill="#990099"/>
<circle cx="1463.4" cy="946.8" r="9.5" fill="#990099"/>
<circle cx="471.2" cy="946.8" r="9.5" fill="#990099"/>
<circle cx="423.1" cy="947.0" r="9.5" fill="#990099"/>
<circle cx="846.4" cy="947.0" r="9.5" fill="#990099"/>
<circle cx="443.5" cy="947.0" r="9.5" fill="#990099"/>
<circle cx="915.7" cy="948.1" r="9.5" fill="#990099"/>
<circle cx="901.6" cy="948.2" r="9.5" fill="#990099"/>
<circle cx="908.7" cy="948.5" r="9.5" fill="#990099"/>
<circle cx="920.9" cy="948.5" r="9.5" fill="#990099"/>
<circle cx="942.8" cy="948.5" r="9.5" fill="#990099"/>
<circle cx="1556.6" cy="949.1" r="9.5" fill="#990099"/>
<circle cx="927.8" cy="949.3" r="9.5" fill="#990099"/>
<circle cx="947.8" cy="949.3" r="9.5" fill="#990099"/>
<circle cx="1438.5" cy="949.4" r="9.5" fill="#ffff00"/>
<circle cx="889.9" cy="949.5" r="9.5" fill="#990099"/>
<circle cx="830.4" cy="949.6" r="9.5" fill="#990099"/>
<circle cx="510.7" cy="949.8" r="9.5" fill="#990099"/>
<circle cx="485.5" cy="950.2" r="9.5" fill="#990099"/>
<circle cx="445.2" cy="950.4" r="9.5" fill="#990099"/>
<circle cx="895.3" cy="950.4" r="9.5" fill="#990099"/>
<circle cx="433.6" cy="950.7" r="9.5" fill="#990099"/>
<circle cx="885.3" cy="951.0" r="9.5" fill="#990099"/>
<circle cx="448.8" cy="951.3" r="9.5" fill="#990099"/>
<circle cx="934.0" cy="951.3" r="9.5" fill="#990099"/>
<circle cx="764.7" cy="951.5" r="9.5" fill="#990099"/>
<circle cx="1453.2" cy="951.9" r="9.5" fill="#990099"/>
<circle cx="1487.7" cy="951.9" r="9.5" fill="#990099"/>
<circle cx="827.9" cy="952.1" r="9.5" fill="#990099"/>
<circle cx="439.1" cy="952.2" r="9.5" fill="#990099"/>
<circle cx="1547.0" cy="952.3" r="9.5" fill="#990099"/>
<circle cx="476.3" cy="952.5" r="9.5" fill="#990099"/>
<circle cx="492.6" cy="952.5" r="9.5" fill="#990099"/>
<circle cx="479.2" cy="952.9" r="9.5" fill="#990099"/>
<circle cx="413.3" cy="952.9" r="9.5" fill="#990099"/>
<circle cx="752.6" cy="953.4" r="9.5" fill="#990099"/>
<circle cx="889.1" cy="953.4" r="9.5" fill="#990099"/>
<circle cx="497.8" cy="953.6" r="9.5" fill="#990099"/>
<circle cx="958.0" cy="953.7" r="9.5" fill="#990099"/>
<circle cx="423.0" cy="954.4" r="9.5" fill="#990099"/>
<circle cx="925.4" cy="954.4" r="9.5" fill="#990099"/>
<circle cx="411.2" cy="954.6" r="9.5" fill="#990099"/>
<circle cx="418.0" cy="954.6" r="9.5" fill="#990099"/>
<circle cx="1461.5" cy="954.9" r="9.5" fill="#990099"/>
<circle cx="1446.2" cy="954.9" r="9.5" fill="#cccccc"/>
<circle cx="905.6" cy="955.0" r="9.5" fill="#990099"/>
<circle cx="951.0" cy="955.6" r="9.5" fill="#990099"/>
<circle cx="894.3" cy="956.0" r="9.5" fill="#990099"/>
<circle cx="431.2" cy="956.3" r="9.5" fill="#990099"/>
<circle cx="946.8" cy="956.4" r="9.5" fill="#990099"/>
<circle cx="911.8" cy="956.6" r="9.5" fill="#990099"/>
<circle cx="919.7" cy="956.6" r="9.5" fill="#990099"/>
<circle cx="940.4" cy="956.7" r="9.5" fill="#990099"/>
<circle cx="468.1" cy="957.2" r="9.5" fill="#990099"/>
<circle cx="479.6" cy="957.2" r="9.5" fill="#990099"/>
<circle cx="1470.4" cy="957.4" r="9.5" fill="#990099"/>
<circle cx="933.8" cy="957.4" r="9.5" fill="#990099"/>
<circle cx="486.9" cy="957.6" r="9.5" fill="#990099"/>
<circle cx="503.5" cy="958.6" r="9.5" fill="#990099"/>
<circle cx="1495.3" cy="959.4" r="9.5" fill="#990099"/>
<circle cx="452.0" cy="959.7" r="9.5" fill="#990099"/>
<circle cx="470.1" cy="959.7" r="9.5" fill="#990099"/>
<circle cx="1453.8" cy="960.0" r="9.5" fill="#990099"/>
<circle cx="1559.8" cy="960.0" r="9.5" fill="#990099"/>
<circle cx="462.3" cy="960.1" r="9.5" fill="#990099"/>
<circle cx="450.7" cy="960.2" r="9.5" fill="#990099"/>
<circle cx="770.2" cy="960.4" r="9.5" fill="#990099"/>
<circle cx="944.2" cy="960.7" r="9.5" fill="#990099"/>
<circle cx="493.8" cy="960.8" r="9.5" fill="#990099"/>
<circle cx="923.8" cy="961.0" r="9.5" fill="#990099"/>
<circle cx="956.4" cy="961.1" r="9.5" fill="#ffff00"/>
<circle cx="1444.9" cy="961.3" r="9.5" fill="#990099"/>
<circle cx="1427.0" cy="961.3" r="9.5" fill="#ffff00"/>
<circle cx="454.0" cy="961.4" r="9.5" fill="#990099"/>
<circle cx="917.9" cy="962.2" r="9.5" fill="#990099"/>
<circle cx="928.1" cy="962.3" r="9.5" fill="#990099"/>
<circle cx="935.2" cy="962.3" r="9.5" fill="#990099"/>
<circle cx="969.9" cy="962.3" r="9.5" fill="#990099"/>
<circle cx="1547.7" cy="962.6" r="9.5" fill="#990099"/>
<circle cx="849.6" cy="963.0" r="9.5" fill="#990099"/>
<circle cx="834.3" cy="963.6" r="9.5" fill="#990099"/>
<circle cx="901.9" cy="963.6" r="9.5" fill="#ffff00"/>
<circle cx="1587.6" cy="963.8" r="9.5" fill="#990099"/>
<circle cx="1434.7" cy="963.8" r="9.5" fill="#ffff00"/>
<circle cx="476.6" cy="964.0" r="9.5" fill="#990099"/>
<circle cx="962.5" cy="964.4" r="9.5" fill="#990099"/>
<circle cx="485.5" cy="964.5" r="9.5" fill="#990099"/>
<circle cx="472.7" cy="964.8" r="9.5" fill="#990099"/>
<circle cx="821.5" cy="964.9" r="9.5" fill="#990099"/>
<circle cx="841.9" cy="964.9" r="9.5" fill="#990099"/>
<circle cx="1044.9" cy="965.3" r="9.5" fill="#990099"/>
<circle cx="509.0" cy="965.5" r="9.5" fill="#990099"/>
<circle cx="964.8" cy="965.5" r="9.5" fill="#990099"/>
<circle cx="1475.5" cy="966.4" r="9.5" fill="#990099"/>
<circle cx="513.2" cy="966.5" r="9.5" fill="#990099"/>
<circle cx="1199.3" cy="966.6" r="9.5" fill="#990099"/>
<circle cx="932.0" cy="966.6" r="9.5" fill="#990099"/>
<circle cx="976.8" cy="966.6" r="9.5" fill="#990099"/>
<circle cx="497.6" cy="967.7" r="9.5" fill="#990099"/>
<circle cx="969.6" cy="967.9" r="9.5" fill="#990099"/>
<circle cx="841.9" cy="968.1" r="9.5" fill="#990099"/>
<circle cx="970.0" cy="968.1" r="9.5" fill="#990099"/>
<circle cx="939.4" cy="968.3" r="9.5" fill="#990099"/>
<circle cx="459.0" cy="968.4" r="9.5" fill="#990099"/>
<circle cx="924.6" cy="968.4" r="9.5" fill="#990099"/>
<circle cx="945.3" cy="968.4" r="9.5" fill="#990099"/>
<circle cx="464.9" cy="968.6" r="9.5" fill="#990099"/>
<circle cx="489.0" cy="968.8" r="9.5" fill="#990099"/>
<circle cx="1456.4" cy="968.9" r="9.5" fill="#990099"/>
<circle cx="1442.3" cy="968.9" r="9.5" fill="#ffff00"/>
<circle cx="910.9" cy="969.4" r="9.5" fill="#ffff00"/>
<circle cx="1521.5" cy="969.6" r="9.5" fill="#990099"/>
<circle cx="818.9" cy="970.0" r="9.5" fill="#990099"/>
<circle cx="1539.4" cy="970.2" r="9.5" fill="#990099"/>
<circle cx="963.1" cy="971.0" r="9.5" fill="#990099"/>
<circle cx="950.5" cy="971.4" r="9.5" fill="#990099"/>
<circle cx="973.1" cy="971.4" r="9.5" fill="#990099"/>
<circle cx="1478.1" cy="971.5" r="9.5" fill="#990099"/>
<circle cx="1496.0" cy="971.5" r="9.5" fill="#990099"/>
<circle cx="490.2" cy="971.6" r="9.5" fill="#990099"/>
<circle cx="976.3" cy="971.9" r="9.5" fill="#990099"/>
<circle cx="471.5" cy="972.5" r="9.5" fill="#990099"/>
<circle cx="496.2" cy="972.5" r="9.5" fill="#990099"/>
<circle cx="929.1" cy="972.5" r="9.5" fill="#990099"/>
<circle cx="862.3" cy="972.6" r="9.5" fill="#ffff00"/>
<circle cx="994.7" cy="972.6" r="9.5" fill="#990099"/>
<circle cx="1547.7" cy="972.8" r="9.5" fill="#990099"/>
<circle cx="1590.0" cy="972.8" r="9.5" fill="#990099"/>
<circle cx="868.7" cy="973.2" r="9.5" fill="#ffff00"/>
<circle cx="454.8" cy="973.4" r="9.5" fill="#990099"/>
<circle cx="943.1" cy="973.9" r="9.5" fill="#990099"/>
<circle cx="1450.6" cy="974.0" r="9.5" fill="#990099"/>
<circle cx="935.7" cy="974.1" r="9.5" fill="#990099"/>
<circle cx="955.5" cy="974.1" r="9.5" fill="#990099"/>
<circle cx="457.1" cy="974.2" r="9.5" fill="#990099"/>
<circle cx="501.3" cy="974.2" r="9.5" fill="#990099"/>
<circle cx="515.0" cy="974.7" r="9.5" fill="#990099"/>
<circle cx="517.4" cy="975.0" r="9.5" fill="#990099"/>
<circle cx="1525.3" cy="975.3" r="9.5" fill="#cccccc"/>
<circle cx="497.5" cy="975.4" r="9.5" fill="#990099"/>
<circle cx="504.1" cy="975.5" r="9.5" fill="#990099"/>
<circle cx="462.3" cy="976.3" r="9.5" fill="#990099"/>
<circle cx="997.9" cy="976.4" r="9.5" fill="#990099"/>
<circle cx="469.5" cy="976.5" r="9.5" fill="#990099"/>
<circle cx="476.6" cy="976.5" r="9.5" fill="#990099"/>
<circle cx="489.2" cy="976.8" r="9.5" fill="#990099"/>
<circle cx="856.0" cy="977.7" r="9.5" fill="#990099"/>
<circle cx="882.8" cy="977.7" r="9.5" fill="#cccccc"/>
<circle cx="899.4" cy="977.7" r="9.5" fill="#990099"/>
<circle cx="862.3" cy="978.9" r="9.5" fill="#990099"/>
<circle cx="875.1" cy="978.9" r="9.5" fill="#990099"/>
<circle cx="449.4" cy="979.3" r="9.5" fill="#990099"/>
<circle cx="948.7" cy="980.0" r="9.5" fill="#990099"/>
<circle cx="492.3" cy="980.1" r="9.5" fill="#990099"/>
<circle cx="868.7" cy="980.2" r="9.5" fill="#990099"/>
<circle cx="483.6" cy="980.2" r="9.5" fill="#990099"/>
<circle cx="1529.8" cy="980.4" r="9.5" fill="#990099"/>
<circle cx="475.2" cy="980.5" r="9.5" fill="#990099"/>
<circle cx="510.7" cy="980.8" r="9.5" fill="#990099"/>
<circle cx="1460.9" cy="981.1" r="9.5" fill="#ffff00"/>
<circle cx="942.3" cy="981.3" r="9.5" fill="#990099"/>
<circle cx="880.2" cy="981.5" r="9.5" fill="#990099"/>
<circle cx="1036.8" cy="981.5" r="9.5" fill="#990099"/>
<circle cx="1000.4" cy="981.5" r="9.5" fill="#990099"/>
<circle cx="1499.8" cy="981.7" r="9.5" fill="#990099"/>
<circle cx="1510.0" cy="981.7" r="9.5" fill="#990099"/>
<circle cx="447.8" cy="981.8" r="9.5" fill="#990099"/>
<circle cx="471.5" cy="982.7" r="9.5" fill="#990099"/>
<circle cx="904.5" cy="982.8" r="9.5" fill="#990099"/>
<circle cx="1441.7" cy="983.0" r="9.5" fill="#ffff00"/>
<circle cx="1469.8" cy="983.0" r="9.5" fill="#cccccc"/>
<circle cx="467.8" cy="983.0" r="9.5" fill="#990099"/>
<circle cx="458.5" cy="983.3" r="9.5" fill="#990099"/>
<circle cx="859.8" cy="984.0" r="9.5" fill="#990099"/>
<circle cx="497.7" cy="984.1" r="9.5" fill="#990099"/>
<circle cx="1483.2" cy="984.3" r="9.5" fill="#ffff00"/>
<circle cx="867.4" cy="985.3" r="9.5" fill="#990099"/>
<circle cx="876.4" cy="985.3" r="9.5" fill="#990099"/>
<circle cx="907.0" cy="985.3" r="9.5" fill="#990099"/>
<circle cx="898.9" cy="985.3" r="9.5" fill="#990099"/>
<circle cx="440.9" cy="986.1" r="9.5" fill="#990099"/>
<circle cx="1078.3" cy="986.6" r="9.5" fill="#990099"/>
<circle cx="1001.7" cy="986.6" r="9.5" fill="#990099"/>
<circle cx="1473.0" cy="986.8" r="9.5" fill="#cccccc"/>
<circle cx="469.5" cy="987.0" r="9.5" fill="#990099"/>
<circle cx="452.2" cy="987.7" r="9.5" fill="#990099"/>
<circle cx="873.8" cy="987.9" r="9.5" fill="#cccccc"/>
<circle cx="843.2" cy="987.9" r="9.5" fill="#990099"/>
<circle cx="854.7" cy="988.5" r="9.5" fill="#cccccc"/>
<circle cx="481.7" cy="988.6" r="9.5" fill="#990099"/>
<circle cx="505.5" cy="988.9" r="9.5" fill="#990099"/>
<circle cx="460.1" cy="989.2" r="9.5" fill="#990099"/>
<circle cx="480.5" cy="990.0" r="9.5" fill="#990099"/>
<circle cx="498.7" cy="990.3" r="9.5" fill="#990099"/>
<circle cx="511.5" cy="990.3" r="9.5" fill="#990099"/>
<circle cx="913.4" cy="990.4" r="9.5" fill="#990099"/>
<circle cx="497.0" cy="990.9" r="9.5" fill="#990099"/>
<circle cx="489.2" cy="991.0" r="9.5" fill="#990099"/>
<circle cx="859.8" cy="991.7" r="9.5" fill="#990099"/>
<circle cx="884.0" cy="991.7" r="9.5" fill="#ffff00"/>
<circle cx="999.8" cy="991.7" r="9.5" fill="#990099"/>
<circle cx="843.4" cy="992.8" r="9.5" fill="#990099"/>
<circle cx="464.7" cy="992.9" r="9.5" fill="#990099"/>
<circle cx="1063.4" cy="993.6" r="9.5" fill="#990099"/>
<circle cx="1574.2" cy="993.6" r="9.5" fill="#990099"/>
<circle cx="1487.0" cy="993.8" r="9.5" fill="#990099"/>
<circle cx="485.1" cy="994.1" r="9.5" fill="#990099"/>
<circle cx="829.1" cy="994.3" r="9.5" fill="#ffff00"/>
<circle cx="1001.7" cy="994.3" r="9.5" fill="#990099"/>
<circle cx="838.9" cy="995.3" r="9.5" fill="#ffff00"/>
<circle cx="884.9" cy="995.3" r="9.5" fill="#990099"/>
<circle cx="474.8" cy="995.5" r="9.5" fill="#990099"/>
<circle cx="498.4" cy="996.6" r="9.5" fill="#990099"/>
<circle cx="873.8" cy="996.8" r="9.5" fill="#990099"/>
<circle cx="834.3" cy="996.8" r="9.5" fill="#ffff00"/>
<circle cx="893.0" cy="996.8" r="9.5" fill="#ffff00"/>
<circle cx="917.2" cy="996.8" r="9.5" fill="#990099"/>
<circle cx="491.0" cy="997.2" r="9.5" fill="#990099"/>
<circle cx="1002.3" cy="998.1" r="9.5" fill="#990099"/>
<circle cx="1468.5" cy="998.3" r="9.5" fill="#ffff00"/>
<circle cx="467.3" cy="998.8" r="9.5" fill="#990099"/>
<circle cx="1510.0" cy="998.9" r="9.5" fill="#990099"/>
<circle cx="827.4" cy="999.1" r="9.5" fill="#ffff00"/>
<circle cx="451.1" cy="1001.4" r="9.5" fill="#ffff00"/>
<circle cx="1163.2" cy="1001.4" r="9.5" fill="#990099"/>
<circle cx="849.6" cy="1001.9" r="9.5" fill="#cccccc"/>
<circle cx="900.6" cy="1001.9" r="9.5" fill="#cccccc"/>
<circle cx="1038.7" cy="1001.9" r="9.5" fill="#990099"/>
<circle cx="1004.9" cy="1001.9" r="9.5" fill="#990099"/>
<circle cx="481.7" cy="1002.2" r="9.5" fill="#990099"/>
<circle cx="916.8" cy="1003.0" r="9.5" fill="#990099"/>
<circle cx="428.2" cy="1003.1" r="9.5" fill="#990099"/>
<circle cx="439.2" cy="1003.1" r="9.5" fill="#990099"/>
<circle cx="498.7" cy="1003.1" r="9.5" fill="#990099"/>
<circle cx="1084.7" cy="1003.8" r="9.5" fill="#990099"/>
<circle cx="842.8" cy="1004.3" r="9.5" fill="#990099"/>
<circle cx="1473.0" cy="1005.3" r="9.5" fill="#ffff00"/>
<circle cx="827.4" cy="1005.5" r="9.5" fill="#cccccc"/>
<circle cx="450.3" cy="1006.5" r="9.5" fill="#ffff00"/>
<circle cx="444.8" cy="1006.5" r="9.5" fill="#990099"/>
<circle cx="900.9" cy="1006.8" r="9.5" fill="#cccccc"/>
<circle cx="996.0" cy="1006.8" r="9.5" fill="#ffff00"/>
<circle cx="1010.1" cy="1009.4" r="9.5" fill="#990099"/>
<circle cx="823.6" cy="1010.0" r="9.5" fill="#cccccc"/>
<circle cx="865.7" cy="1010.6" r="9.5" fill="#990099"/>
<circle cx="543.4" cy="1010.7" r="9.5" fill="#990099"/>
<circle cx="987.0" cy="1013.2" r="9.5" fill="#990099"/>
<circle cx="1003.6" cy="1013.2" r="9.5" fill="#990099"/>
<circle cx="1008.8" cy="1013.2" r="9.5" fill="#990099"/>
<circle cx="803.8" cy="1013.8" r="9.5" fill="#990099"/>
<circle cx="920.6" cy="1013.8" r="9.5" fill="#ffff00"/>
<circle cx="894.5" cy="1014.5" r="9.5" fill="#990099"/>
<circle cx="1066.1" cy="1016.2" r="9.5" fill="#990099"/>
<circle cx="811.5" cy="1017.0" r="9.5" fill="#cccccc"/>
<circle cx="994.0" cy="1017.0" r="9.5" fill="#ffff00"/>
<circle cx="478.3" cy="1018.4" r="9.5" fill="#990099"/>
<circle cx="876.6" cy="1020.9" r="9.5" fill="#990099"/>
<circle cx="1492.8" cy="1021.3" r="9.5" fill="#990099"/>
<circle cx="814.0" cy="1022.8" r="9.5" fill="#cccccc"/>
<circle cx="895.7" cy="1022.8" r="9.5" fill="#990099"/>
<circle cx="1468.9" cy="1023.2" r="9.5" fill="#990099"/>
<circle cx="867.7" cy="1026.6" r="9.5" fill="#990099"/>
<circle cx="446.0" cy="1026.9" r="9.5" fill="#990099"/>
<circle cx="881.1" cy="1027.2" r="9.5" fill="#990099"/>
<circle cx="1501.7" cy="1030.2" r="9.5" fill="#990099"/>
<circle cx="938.3" cy="1031.7" r="9.5" fill="#990099"/>
<circle cx="800.0" cy="1032.3" r="9.5" fill="#ffff00"/>
<circle cx="458.8" cy="1032.8" r="9.5" fill="#990099"/>
<circle cx="432.8" cy="1033.3" r="9.5" fill="#ffff00"/>
<circle cx="474.1" cy="1033.7" r="9.5" fill="#990099"/>
<circle cx="810.2" cy="1035.5" r="9.5" fill="#990099"/>
<circle cx="1518.9" cy="1036.0" r="9.5" fill="#990099"/>
<circle cx="487.7" cy="1036.2" r="9.5" fill="#990099"/>
<circle cx="844.7" cy="1036.2" r="9.5" fill="#990099"/>
<circle cx="858.1" cy="1036.2" r="9.5" fill="#990099"/>
<circle cx="1533.0" cy="1036.6" r="9.5" fill="#990099"/>
<circle cx="1506.2" cy="1037.2" r="9.5" fill="#ffff00"/>
<circle cx="482.2" cy="1037.4" r="9.5" fill="#cccccc"/>
<circle cx="1315.4" cy="1040.2" r="9.5" fill="#990099"/>
<circle cx="908.5" cy="1041.3" r="9.5" fill="#cccccc"/>
<circle cx="1501.1" cy="1041.7" r="9.5" fill="#cccccc"/>
<circle cx="898.9" cy="1042.6" r="9.5" fill="#990099"/>
<circle cx="813.0" cy="1042.8" r="9.5" fill="#990099"/>
<circle cx="942.3" cy="1043.8" r="9.5" fill="#ffff00"/>
<circle cx="892.6" cy="1043.8" r="9.5" fill="#990099"/>
<circle cx="467.3" cy="1043.9" r="9.5" fill="#990099"/>
<circle cx="944.9" cy="1045.1" r="9.5" fill="#ffff00"/>
<circle cx="882.3" cy="1045.1" r="9.5" fill="#990099"/>
<circle cx="921.3" cy="1045.7" r="9.5" fill="#ffff00"/>
<circle cx="1497.9" cy="1046.8" r="9.5" fill="#cccccc"/>
<circle cx="442.1" cy="1049.8" r="9.5" fill="#ffff00"/>
<circle cx="925.7" cy="1050.9" r="9.5" fill="#ffff00"/>
<circle cx="478.3" cy="1053.2" r="9.5" fill="#990099"/>
<circle cx="943.6" cy="1053.4" r="9.5" fill="#cccccc"/>
<circle cx="872.8" cy="1053.4" r="9.5" fill="#990099"/>
<circle cx="893.8" cy="1054.7" r="9.5" fill="#ffff00"/>
<circle cx="444.8" cy="1057.5" r="9.5" fill="#990099"/>
<circle cx="917.4" cy="1059.8" r="9.5" fill="#cccccc"/>
<circle cx="467.3" cy="1061.7" r="9.5" fill="#990099"/>
<circle cx="833.8" cy="1062.7" r="9.5" fill="#990099"/>
<circle cx="904.7" cy="1063.6" r="9.5" fill="#ffff00"/>
<circle cx="908.5" cy="1072.6" r="9.5" fill="#ffff00"/>
<circle cx="911.4" cy="1077.0" r="9.5" fill="#ffff00"/>
<circle cx="1456.6" cy="1089.4" r="9.5" fill="#ffff00"/>
<circle cx="911.4" cy="1089.5" r="9.5" fill="#990099"/>
<circle cx="1032.6" cy="1098.8" r="9.5" fill="#990099"/>
<circle cx="1475.5" cy="1104.1" r="9.5" fill="#990099"/>
<circle cx="920.9" cy="1110.9" r="9.5" fill="#990099"/>
<circle cx="1464.7" cy="1170.5" r="9.5" fill="#ffff00"/>
<circle cx="1473.0" cy="1183.9" r="9.5" fill="#ffff00"/>
</g>
</svg>
<!--/MAP-->
<!--CTRL-->
<div style="position:absolute;left:53.3px;top:544.3px;width:44px;height:85.6px;box-sizing:border-box;border:2.6px solid rgba(0,0,0,.2);border-radius:5px;background:#fff;background-clip:padding-box;">
 <div style="position:absolute;left:0;top:0;width:100%;height:40.4px;border-bottom:1.3px solid #ccc;box-sizing:border-box;"></div>
 <svg width="38" height="78" viewBox="0 0 38 78" style="position:absolute;left:0;top:0"><path d="M12.6 20.8h16.4M20.8 12.6v16.4" stroke="#000" stroke-width="2.8" fill="none"/><path d="M12.6 62.4h16.4" stroke="#000" stroke-width="2.7" fill="none"/></svg>
</div>
<div style="position:absolute;left:53.3px;top:643px;width:44px;height:44px;box-sizing:border-box;border:2.6px solid rgba(0,0,0,.2);border-radius:5px;background:#fff;background-clip:padding-box;">
 <svg width="38" height="40" viewBox="0 0 38 40" style="position:absolute;left:0;top:0"><path d="M11 15.5v-6.3h6.5M23.7 9.2h6.5v6.3M30.2 23v6.3h-6.5M17.5 29.3H11V23" stroke="#464646" stroke-width="2.9" fill="none"/></svg>
</div>
<div style="position:absolute;left:1774px;top:544px;width:63px;height:63px;box-sizing:border-box;border:2.6px solid rgba(0,0,0,.2);border-radius:7px;background:#fff;background-clip:padding-box;">
 <svg width="58" height="58" viewBox="0 0 58 58" style="position:absolute;left:0;top:0"><path d="M29 28l-17.5 8.8L29 45.6l17.5-8.8z" fill="#b9b9b9" stroke="#8f8f8f" stroke-width="0.7"/><path d="M29 21.5l-17.5 8.8L29 39.1l17.5-8.8z" fill="#cfcfcf" stroke="#9a9a9a" stroke-width="0.7"/><path d="M29 14l-17.5 8.8L29 31.6l17.5-8.8z" fill="#e6e6e6" fill-opacity=".92" stroke="#a8a8a8" stroke-width="0.7"/></svg>
</div>
<div style="position:absolute;left:1538px;top:1175px;width:312px;height:24px;background:rgba(255,255,255,.8);font-size:16px;line-height:22px;color:#333;white-space:nowrap;overflow:hidden;">
 <span style="display:inline-block;width:16px;height:11px;margin:0 3px 0 8px;background:linear-gradient(#4c7be1 0 50%,#ffd500 50% 100%);vertical-align:-1px;"></span><span style="color:#0078a8">Leaflet</span> | &copy; <span style="color:#0078a8">OpenStreetMap</span> contributors
</div>
<!--/CTRL-->
</body>
</html>
